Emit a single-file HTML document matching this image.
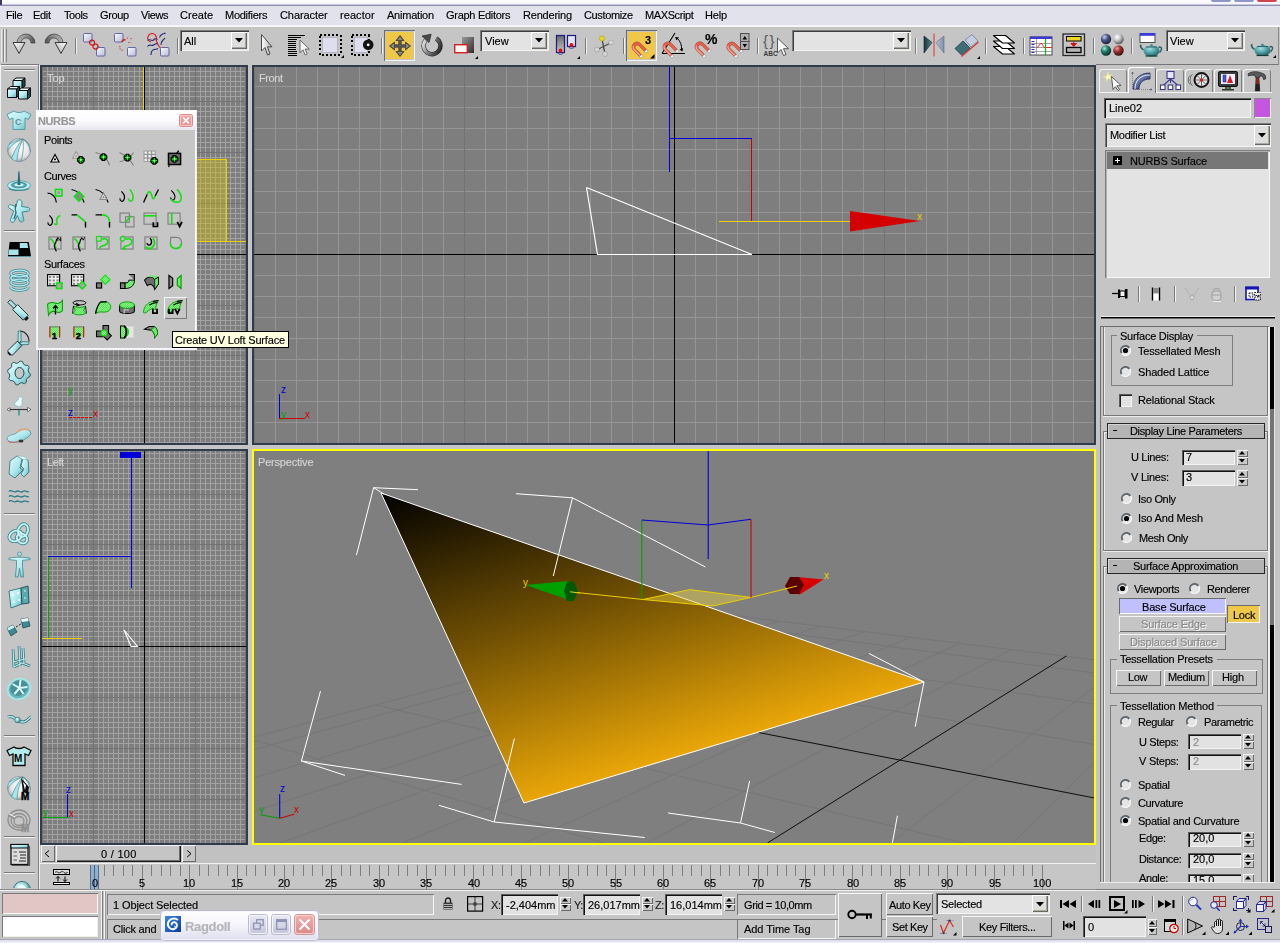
<!DOCTYPE html>
<html><head><meta charset="utf-8"><title>3ds max</title><style>html,body{margin:0;padding:0}body{width:1280px;height:943px;position:relative;overflow:hidden;background:#c5c5c5;font-family:'Liberation Sans',sans-serif;font-size:11px}
body>div,body>svg,body>span{position:absolute;display:block}
div div,div svg,div span{position:absolute}
.t{will-change:transform;white-space:pre;-webkit-text-stroke:0.15px currentColor}
svg{overflow:hidden}
</style></head><body>
<svg width="0" height="0" style="left:0;top:0"><defs><linearGradient id="bxg" x1="0" y1="0" x2="1" y2="1"><stop offset="0" stop-color="#fafaff"/><stop offset="1" stop-color="#b8bcd8"/></linearGradient><linearGradient id="mg" x1="0" y1="0" x2="1" y2="0"><stop offset="0" stop-color="#f08a70"/><stop offset="0.500" stop-color="#e24a30"/><stop offset="1" stop-color="#b83020"/></linearGradient><radialGradient id="tp" cx="0.400" cy="0.300" r="0.800"><stop offset="0" stop-color="#a8dede"/><stop offset="0.500" stop-color="#4a9ea2"/><stop offset="1" stop-color="#1e4e54"/></radialGradient><linearGradient id="tl" x1="0" y1="0" x2="1" y2="1"><stop offset="0" stop-color="#e2fdfd"/><stop offset="0.550" stop-color="#aee8ee"/><stop offset="1" stop-color="#62b0b8"/></linearGradient>
<radialGradient id="tr" cx="0.350" cy="0.300" r="0.800"><stop offset="0" stop-color="#e4fcfc"/><stop offset="0.500" stop-color="#8ed0d6"/><stop offset="1" stop-color="#2e6e76"/></radialGradient><radialGradient id="bg1" cx="0.550" cy="0.400" r="0.700"><stop offset="0" stop-color="#ffffff"/><stop offset="0.600" stop-color="#e4e4e4"/><stop offset="1" stop-color="#8e8e8e"/></radialGradient><pattern id="gh" width="2" height="2" patternUnits="userSpaceOnUse"><rect width="2" height="2" fill="#18e018"/><rect width="1" height="1" fill="#c8f8c8"/><rect x="1" y="1" width="1" height="1" fill="#c8f8c8"/></pattern></defs></svg>
<div style="left:0px;top:0px;width:1280px;height:4px;background:linear-gradient(#ffffff,#f4f4fa);"></div>
<div style="left:0px;top:4px;width:1280px;height:1px;background:#c9c9dd;"></div>
<div style="left:0px;top:5px;width:1280px;height:1px;background:#8f8fb4;"></div>
<div style="left:0px;top:0px;width:2px;height:5px;background:#3a3a6a;"></div>
<div style="left:1211px;top:0px;width:20px;height:2px;background:#8d96c6;border-radius:0 0 3px 3px"></div>
<div style="left:1234px;top:0px;width:20px;height:2px;background:#8d96c6;border-radius:0 0 3px 3px"></div>
<div style="left:1257px;top:0px;width:20px;height:2px;background:#d0464f;border-radius:0 0 3px 3px"></div>
<div style="left:0px;top:6px;width:1280px;height:19px;background:#e1e2ec;"></div>
<div style="left:0px;top:25px;width:1280px;height:2px;background:#f6f6f8;"></div>
<span class="t" style="left:6.00px;top:10px;font-size:11px;line-height:11px;color:#000;letter-spacing:-0.400px;">File</span>
<span class="t" style="left:33.00px;top:10px;font-size:11px;line-height:11px;color:#000;letter-spacing:-0.299px;">Edit</span>
<span class="t" style="left:64.00px;top:10px;font-size:11px;line-height:11px;color:#000;letter-spacing:-0.400px;">Tools</span>
<span class="t" style="left:100.00px;top:10px;font-size:11px;line-height:11px;color:#000;letter-spacing:-0.364px;">Group</span>
<span class="t" style="left:141.00px;top:10px;font-size:11px;line-height:11px;color:#000;letter-spacing:-0.400px;">Views</span>
<span class="t" style="left:180.00px;top:10px;font-size:11px;line-height:11px;color:#000;letter-spacing:0.020px;">Create</span>
<span class="t" style="left:225.00px;top:10px;font-size:11px;line-height:11px;color:#000;letter-spacing:-0.265px;">Modifiers</span>
<span class="t" style="left:280.00px;top:10px;font-size:11px;line-height:11px;color:#000;letter-spacing:-0.079px;">Character</span>
<span class="t" style="left:340.00px;top:10px;font-size:11px;line-height:11px;color:#000;letter-spacing:0.071px;">reactor</span>
<span class="t" style="left:387.00px;top:10px;font-size:11px;line-height:11px;color:#000;letter-spacing:-0.225px;">Animation</span>
<span class="t" style="left:446.00px;top:10px;font-size:11px;line-height:11px;color:#000;letter-spacing:-0.280px;">Graph Editors</span>
<span class="t" style="left:523.00px;top:10px;font-size:11px;line-height:11px;color:#000;letter-spacing:-0.205px;">Rendering</span>
<span class="t" style="left:584.00px;top:10px;font-size:11px;line-height:11px;color:#000;letter-spacing:-0.355px;">Customize</span>
<span class="t" style="left:645.00px;top:10px;font-size:11px;line-height:11px;color:#000;letter-spacing:-0.400px;">MAXScript</span>
<span class="t" style="left:705.00px;top:10px;font-size:11px;line-height:11px;color:#000;letter-spacing:-0.168px;">Help</span>
<div style="left:1px;top:29px;width:1px;height:33px;background:#eeeeee;"></div>
<div style="left:3px;top:29px;width:1px;height:33px;background:#858585;"></div>
<div style="left:4px;top:29px;width:1px;height:33px;background:#eeeeee;"></div>
<div style="left:6px;top:29px;width:1px;height:33px;background:#858585;"></div>
<div style="left:0px;top:940px;width:1280px;height:3px;background:linear-gradient(#d8d8ea,#f4f4fc);"></div>
<div style="left:0px;top:939px;width:1280px;height:1px;background:#a8a8b8;"></div>
<div style="left:40px;top:65px;width:208px;height:380px;background:#303c4c;"></div>
<svg style="left:42px;top:67px;" width="204" height="376"><rect width="204" height="376" fill="#7e7e7e"/><path d="M5.5 0V376M10.5 0V376M15.5 0V376M20.5 0V376M25.5 0V376M31.5 0V376M36.5 0V376M41.5 0V376M46.5 0V376M56.5 0V376M61.5 0V376M66.5 0V376M71.5 0V376M76.5 0V376M81.5 0V376M86.5 0V376M92.5 0V376M97.5 0V376M107.5 0V376M112.5 0V376M117.5 0V376M122.5 0V376M127.5 0V376M132.5 0V376M137.5 0V376M142.5 0V376M147.5 0V376M158.5 0V376M163.5 0V376M168.5 0V376M173.5 0V376M178.5 0V376M183.5 0V376M188.5 0V376M193.5 0V376M198.5 0V376M0 4.5H204M0 9.5H204M0 14.5H204M0 19.5H204M0 24.5H204M0 29.5H204M0 39.5H204M0 44.5H204M0 49.5H204M0 55.5H204M0 60.5H204M0 65.5H204M0 70.5H204M0 75.5H204M0 80.5H204M0 90.5H204M0 95.5H204M0 100.5H204M0 105.5H204M0 110.5H204M0 116.5H204M0 121.5H204M0 126.5H204M0 131.5H204M0 141.5H204M0 146.5H204M0 151.5H204M0 156.5H204M0 161.5H204M0 166.5H204M0 171.5H204M0 177.5H204M0 182.5H204M0 192.5H204M0 197.5H204M0 202.5H204M0 207.5H204M0 212.5H204M0 217.5H204M0 222.5H204M0 227.5H204M0 232.5H204M0 243.5H204M0 248.5H204M0 253.5H204M0 258.5H204M0 263.5H204M0 268.5H204M0 273.5H204M0 278.5H204M0 283.5H204M0 293.5H204M0 299.5H204M0 304.5H204M0 309.5H204M0 314.5H204M0 319.5H204M0 324.5H204M0 329.5H204M0 334.5H204M0 344.5H204M0 349.5H204M0 354.5H204M0 360.5H204M0 365.5H204M0 370.5H204M0 375.5H204" stroke="#a2a2a2" stroke-width="1" shape-rendering="crispEdges" fill="none"/><path d="M0.5 0V376M51.5 0V376M153.5 0V376M203.5 0V376M0 34.5H204M0 85.5H204M0 136.5H204M0 238.5H204M0 288.5H204M0 339.5H204" stroke="#737373" stroke-width="1" shape-rendering="crispEdges" fill="none"/><path d="M102.5 0V376M0 187.5H204" stroke="#000" stroke-width="1" shape-rendering="crispEdges" fill="none"/><rect x="102" y="92" width="82" height="82" fill="#d8c400" fill-opacity="0.38"/><path d="M101.5 0V174M101 174.5H204M101 92.5H184M184.5 92V174" stroke="#ecd000" stroke-width="1" fill="none" shape-rendering="crispEdges"/><path d="M27 350.5H51" stroke="#d00000" stroke-dasharray="3 1" stroke-width="1" fill="none" shape-rendering="crispEdges"/><text x="26" y="327" fill="#00a000" font-size="10" font-family="Liberation Sans, sans-serif">y</text><text x="26" y="349" fill="#0000d0" font-size="10" font-family="Liberation Sans, sans-serif">z</text><text x="51" y="350" fill="#d00000" font-size="10" font-family="Liberation Sans, sans-serif">x</text></svg>
<span class="t" style="left:47.40px;top:73px;font-size:11px;line-height:11px;color:#d4d4d4;letter-spacing:-0.059px;">Top</span>
<div style="left:252px;top:65px;width:844px;height:380px;background:#303c4c;"></div>
<svg style="left:254px;top:67px;" width="840" height="376"><rect width="840" height="376" fill="#7e7e7e"/><path d="M21.5 0V376M42.5 0V376M63.5 0V376M84.5 0V376M105.5 0V376M126.5 0V376M147.5 0V376M168.5 0V376M189.5 0V376M231.5 0V376M252.5 0V376M273.5 0V376M294.5 0V376M315.5 0V376M336.5 0V376M357.5 0V376M378.5 0V376M399.5 0V376M441.5 0V376M462.5 0V376M483.5 0V376M504.5 0V376M525.5 0V376M546.5 0V376M567.5 0V376M588.5 0V376M609.5 0V376M651.5 0V376M672.5 0V376M693.5 0V376M714.5 0V376M735.5 0V376M756.5 0V376M777.5 0V376M798.5 0V376M819.5 0V376M0 19.5H840M0 40.5H840M0 61.5H840M0 82.5H840M0 103.5H840M0 124.5H840M0 145.5H840M0 166.5H840M0 208.5H840M0 229.5H840M0 250.5H840M0 271.5H840M0 292.5H840M0 313.5H840M0 334.5H840M0 355.5H840" stroke="#959595" stroke-width="1" shape-rendering="crispEdges" fill="none"/><path d="M0.5 0V376M210.5 0V376M630.5 0V376" stroke="#737373" stroke-width="1" shape-rendering="crispEdges" fill="none"/><path d="M420.5 0V376M0 187.5H840" stroke="#000" stroke-width="1" shape-rendering="crispEdges" fill="none"/><path d="M415.5 0V105M415 71.5H498" stroke="#0000d8" stroke-width="1" fill="none" shape-rendering="crispEdges"/><path d="M497.5 72V154" stroke="#d00000" stroke-width="1" fill="none" shape-rendering="crispEdges"/><path d="M465 154.5H597" stroke="#ecd000" stroke-width="1" fill="none" shape-rendering="crispEdges"/><path d="M596 144L666 154L596 164.5z" fill="#d40000"/><text x="663" y="153" fill="#ecd000" font-size="10" font-family="Liberation Sans, sans-serif">x</text><path d="M332.5 120.5L343.5 187.5L498.0 187.5L332.5 120.5" stroke="#fff" stroke-width="1.2" fill="none" /><path d="M25.5 327V352" stroke="#0000d8" stroke-width="1" fill="none" shape-rendering="crispEdges"/><path d="M25 351.5H51" stroke="#d00000" stroke-width="1" fill="none" shape-rendering="crispEdges"/><text x="27" y="326" fill="#0000d8" font-size="10" font-family="Liberation Sans, sans-serif">z</text><text x="51" y="351" fill="#d00000" font-size="10" font-family="Liberation Sans, sans-serif">x</text><text x="27" y="351" fill="#00a000" font-size="10" font-family="Liberation Sans, sans-serif">y</text></svg>
<span class="t" style="left:258.90px;top:73px;font-size:11px;line-height:11px;color:#d4d4d4;letter-spacing:-0.400px;">Front</span>
<div style="left:40px;top:449px;width:208px;height:396px;background:#303c4c;"></div>
<svg style="left:42px;top:451px;" width="204" height="392"><rect width="204" height="392" fill="#7e7e7e"/><path d="M5.5 0V392M10.5 0V392M15.5 0V392M20.5 0V392M25.5 0V392M31.5 0V392M36.5 0V392M41.5 0V392M46.5 0V392M56.5 0V392M61.5 0V392M66.5 0V392M71.5 0V392M76.5 0V392M81.5 0V392M86.5 0V392M92.5 0V392M97.5 0V392M107.5 0V392M112.5 0V392M117.5 0V392M122.5 0V392M127.5 0V392M132.5 0V392M137.5 0V392M142.5 0V392M147.5 0V392M158.5 0V392M163.5 0V392M168.5 0V392M173.5 0V392M178.5 0V392M183.5 0V392M188.5 0V392M193.5 0V392M198.5 0V392M0 2.5H204M0 7.5H204M0 12.5H204M0 17.5H204M0 22.5H204M0 27.5H204M0 32.5H204M0 38.5H204M0 48.5H204M0 53.5H204M0 58.5H204M0 63.5H204M0 68.5H204M0 73.5H204M0 78.5H204M0 83.5H204M0 88.5H204M0 99.5H204M0 104.5H204M0 109.5H204M0 114.5H204M0 119.5H204M0 124.5H204M0 129.5H204M0 134.5H204M0 139.5H204M0 149.5H204M0 154.5H204M0 160.5H204M0 165.5H204M0 170.5H204M0 175.5H204M0 180.5H204M0 185.5H204M0 190.5H204M0 200.5H204M0 205.5H204M0 210.5H204M0 215.5H204M0 221.5H204M0 226.5H204M0 231.5H204M0 236.5H204M0 241.5H204M0 251.5H204M0 256.5H204M0 261.5H204M0 266.5H204M0 271.5H204M0 276.5H204M0 282.5H204M0 287.5H204M0 292.5H204M0 302.5H204M0 307.5H204M0 312.5H204M0 317.5H204M0 322.5H204M0 327.5H204M0 332.5H204M0 337.5H204M0 343.5H204M0 353.5H204M0 358.5H204M0 363.5H204M0 368.5H204M0 373.5H204M0 378.5H204M0 383.5H204M0 388.5H204" stroke="#a2a2a2" stroke-width="1" shape-rendering="crispEdges" fill="none"/><path d="M0.5 0V392M51.5 0V392M153.5 0V392M203.5 0V392M0 43.5H204M0 93.5H204M0 144.5H204M0 246.5H204M0 297.5H204M0 348.5H204" stroke="#737373" stroke-width="1" shape-rendering="crispEdges" fill="none"/><path d="M102.5 0V392M0 195.5H204" stroke="#000" stroke-width="1" shape-rendering="crispEdges" fill="none"/><rect x="78" y="1" width="21" height="6" fill="#0000d8"/><path d="M89.5 7V137M6 105.5H90" stroke="#0000d8" stroke-width="1" fill="none" shape-rendering="crispEdges"/><path d="M6.5 106V187" stroke="#00a800" stroke-width="1" fill="none" shape-rendering="crispEdges"/><path d="M0 187.5H40" stroke="#ecd000" stroke-width="1" fill="none" shape-rendering="crispEdges"/><path d="M82.0 179.0L89.0 195.5L95.5 195.5L82.0 179.0" stroke="#fff" stroke-width="1.1" fill="none" /><path d="M25.5 343V367" stroke="#0000d8" stroke-width="1" fill="none" shape-rendering="crispEdges"/><path d="M1 366.5H26" stroke="#00a800" stroke-width="1" fill="none" shape-rendering="crispEdges"/><text x="24" y="342" fill="#0000d8" font-size="10" font-family="Liberation Sans, sans-serif">z</text><text x="1" y="365" fill="#00a000" font-size="10" font-family="Liberation Sans, sans-serif">y</text><text x="27" y="366" fill="#d00000" font-size="10" font-family="Liberation Sans, sans-serif">x</text></svg>
<span class="t" style="left:46.80px;top:457px;font-size:11px;line-height:11px;color:#d4d4d4;letter-spacing:-0.397px;">Left</span>
<div style="left:252px;top:449px;width:844px;height:396px;background:#ffff00;"></div>
<svg style="left:254px;top:451px;" width="840" height="392"><rect width="840" height="392" fill="#7f7f7f"/><path d="M2003.5 1807.9L1313.2 267.0M1412.8 1455.6L1226.0 256.3M1012.5 1216.8L1144.9 246.3M723.4 1044.3L1069.3 237.0M504.7 913.9L998.7 228.3M333.5 811.8L932.6 220.2M195.9 729.7L870.6 212.6M-11.7 605.9L757.5 198.7M-91.9 558.0L705.7 192.3M-160.9 516.9L656.8 186.3M-220.7 481.2L610.5 180.6M-273.2 449.9L566.6 175.2M-319.6 422.2L525.0 170.1M-360.8 397.6L485.4 165.3M-379.8 386.3L466.3 162.9M2003.5 1807.9L-379.8 386.3M1664.9 1052.0L-167.1 330.1M1523.9 737.4L-5.4 287.5M1446.7 564.9L121.7 253.9M1364.3 381.0L308.6 204.6M1339.8 326.2L379.4 185.9M1321.0 284.4L439.5 170.0M1313.2 267.0L466.3 162.9" stroke="#767676" stroke-width="1" fill="none"/><path d="M504.0 281.4L840.0 346.9" stroke="#000" stroke-width="0.9" fill="none" /><path d="M812.4 205.0L513.4 392.0" stroke="#000" stroke-width="0.9" fill="none" /><defs><linearGradient id="tg" gradientUnits="userSpaceOnUse" x1="127.0" y1="42.0" x2="224.9" y2="365.6"><stop offset="0" stop-color="#000"/><stop offset="0.500" stop-color="#6f4f03"/><stop offset="1" stop-color="#e9a608"/></linearGradient></defs><path d="M127 42L270 352L670 231z" fill="url(#tg)" stroke="#fff" stroke-width="1"/><path d="M164.0 38.7L119.6 36.7L102.5 104.0" stroke="#fff" stroke-width="1" fill="none" /><path d="M119.6 36.7L130.0 43.0" stroke="#fff" stroke-width="1" fill="none" /><path d="M262.0 42.7L318.5 46.8L299.3 125.0" stroke="#fff" stroke-width="1" fill="none" /><path d="M318.5 46.8L451.5 116.0" stroke="#fff" stroke-width="1" fill="none" /><path d="M387.8 69.0L387.8 148.4" stroke="#00a000" stroke-width="1.1" fill="none" /><path d="M387.79999999999995 148.39999999999998L435.79999999999995 138.60000000000002L497 146.39999999999998L459 155z" fill="#e8d040" fill-opacity="0.45"/><path d="M318.0 141.0L389.0 148.5L435.8 138.6L497.0 146.4" stroke="#ecd000" stroke-width="1" fill="none" /><path d="M389.0 148.5L459.0 155.0L497.0 146.4L541.0 135.5" stroke="#ecd000" stroke-width="1" fill="none" /><path d="M454.2 0.0L454.2 108.0" stroke="#0000d8" stroke-width="1.1" fill="none" /><path d="M387.8 69.0L454.0 74.0L497.0 68.3" stroke="#0000d8" stroke-width="1.1" fill="none" /><path d="M497.0 68.3L497.0 146.4" stroke="#d00000" stroke-width="1.1" fill="none" /><path d="M271.4 134L315 130L318 150z" fill="#00a000"/><path d="M313 130.5L320 130.5L323.5 140L320 150L313 150L310 140z" fill="#005a00"/><path d="M316.0 140.8L326.0 142.0" stroke="#ecd000" stroke-width="1" fill="none" /><text x="269" y="135" fill="#ecd000" font-size="10" font-family="Liberation Sans, sans-serif">y</text><path d="M569.4 128.5L543 126L545 144z" fill="#d80000"/><path d="M536 126l9 0l5 8l-5 9l-9 0l-5 -8z" fill="#5a0000"/><path d="M531.0 138.0L543.0 135.0" stroke="#ecd000" stroke-width="1" fill="none" /><text x="570" y="128" fill="#ecd000" font-size="10" font-family="Liberation Sans, sans-serif">x</text><path d="M614.9 202.4L670.0 231.0L661.2 275.7" stroke="#fff" stroke-width="1" fill="none" /><path d="M66.5 240.0L47.4 310.0L207.6 333.4" stroke="#fff" stroke-width="1" fill="none" /><path d="M47.4 310.0L91.0 324.4" stroke="#fff" stroke-width="1" fill="none" /><path d="M260.4 287.4L240.2 371.0L390.7 386.5" stroke="#fff" stroke-width="1" fill="none" /><path d="M240.2 371.0L185.0 354.3" stroke="#fff" stroke-width="1" fill="none" /><path d="M495.6 330.0L486.5 372.0L520.8 381.5" stroke="#fff" stroke-width="1" fill="none" /><path d="M486.5 372.0L414.0 362.0" stroke="#fff" stroke-width="1" fill="none" /><path d="M643.4 364.7L638.4 392.0" stroke="#fff" stroke-width="1" fill="none" /><path d="M25.7 367.2L25.7 343.0" stroke="#0000d8" stroke-width="1.1" fill="none" /><path d="M25.7 367.2L7.4 364.0" stroke="#00a000" stroke-width="1.1" fill="none" /><path d="M25.7 367.2L40.2 363.2" stroke="#d00000" stroke-width="1.1" fill="none" /><text x="26" y="341" fill="#0000d8" font-size="10" font-family="Liberation Sans, sans-serif">z</text><text x="5" y="362" fill="#00a000" font-size="10" font-family="Liberation Sans, sans-serif">y</text><text x="40" y="362" fill="#d00000" font-size="10" font-family="Liberation Sans, sans-serif">x</text></svg>
<span class="t" style="left:258.40px;top:457px;font-size:11px;line-height:11px;color:#d4d4d4;letter-spacing:-0.195px;">Perspective</span>
<div style="left:1096px;top:64px;width:183px;height:1px;background:#767676;"></div>
<div style="left:1278px;top:27px;width:1px;height:38px;background:#8a8a8a;"></div>
<div style="left:1099px;top:69px;width:28px;height:23px;background:#c5c5c5;box-shadow:inset 1px 1px 0 #f4f4f4,inset -1px 0 0 #808080;border-radius:3px 3px 0 0"></div>
<div style="left:1128px;top:67px;width:28px;height:26px;background:#c5c5c5;box-shadow:inset 1px 1px 0 #fff,inset -1px 0 0 #6a6a6a;border-radius:3px 3px 0 0"></div>
<div style="left:1156px;top:69px;width:28px;height:23px;background:#c5c5c5;box-shadow:inset 1px 1px 0 #f4f4f4,inset -1px 0 0 #808080;border-radius:3px 3px 0 0"></div>
<div style="left:1185px;top:69px;width:28px;height:23px;background:#c5c5c5;box-shadow:inset 1px 1px 0 #f4f4f4,inset -1px 0 0 #808080;border-radius:3px 3px 0 0"></div>
<div style="left:1214px;top:69px;width:28px;height:23px;background:#c5c5c5;box-shadow:inset 1px 1px 0 #f4f4f4,inset -1px 0 0 #808080;border-radius:3px 3px 0 0"></div>
<div style="left:1243px;top:69px;width:28px;height:23px;background:#c5c5c5;box-shadow:inset 1px 1px 0 #f4f4f4,inset -1px 0 0 #808080;border-radius:3px 3px 0 0"></div>
<div style="left:1099px;top:92px;width:29px;height:1px;background:#f4f4f4;"></div>
<div style="left:1156px;top:92px;width:116px;height:1px;background:#f4f4f4;"></div>
<div style="left:1104px;top:98px;width:147px;height:20px;background:#e2e2e2;box-shadow:inset 1px 1px 0 #5a5a5a,inset 2px 2px 0 #111,inset -1px -1px 0 #f4f4f4;"></div>
<span class="t" style="left:1108.50px;top:103px;font-size:11px;line-height:11px;color:#000;">Line02</span>
<div style="left:1254px;top:98px;width:17px;height:20px;background:#c556e0;box-shadow:inset 1px 1px 0 #8a8a8a,inset -1px -1px 0 #f4f4f4;"></div>
<div style="left:1105px;top:123px;width:166px;height:24px;background:#e3e3e3;box-shadow:inset 1px 1px 0 #7c7c7c,inset 2px 2px 0 #3c3c3c,inset -1px -1px 0 #f4f4f4;"></div>
<div style="left:1254px;top:125px;width:16px;height:20px;background:#dedede;box-shadow:inset 1px 1px 0 #fff,inset -1px -1px 0 #6a6a60,inset -2px -2px 0 #a8a8a0;"></div>
<svg style="left:1258px;top:133px;" width="8" height="5"><path d="M0 0h8l-4 4.5z" fill="#000"/></svg>
<span class="t" style="left:1109.70px;top:130px;font-size:11px;line-height:11px;color:#000;letter-spacing:-0.312px;">Modifier List</span>
<div style="left:1105px;top:150px;width:165px;height:128px;background:#e3e3e3;box-shadow:inset 1px 1px 0 #7c7c7c,inset 2px 2px 0 #b0b0b0,inset -1px -1px 0 #f8f8f8;"></div>
<div style="left:1107px;top:152px;width:161px;height:17px;background:#777777;"></div>
<div style="left:1113px;top:156px;width:9px;height:9px;background:#000;"></div>
<div style="left:1115px;top:160px;width:5px;height:1px;background:#fff;"></div>
<div style="left:1117px;top:158px;width:1px;height:5px;background:#fff;"></div>
<span class="t" style="left:1130.00px;top:156px;font-size:11px;line-height:11px;color:#000;letter-spacing:-0.196px;">NURBS Surface</span>
<div style="left:1138px;top:286px;width:1px;height:16px;background:#7a7a7a;"></div>
<div style="left:1139px;top:286px;width:1px;height:16px;background:#f2f2f2;"></div>
<div style="left:1174px;top:286px;width:1px;height:16px;background:#7a7a7a;"></div>
<div style="left:1175px;top:286px;width:1px;height:16px;background:#f2f2f2;"></div>
<div style="left:1234px;top:286px;width:1px;height:16px;background:#7a7a7a;"></div>
<div style="left:1235px;top:286px;width:1px;height:16px;background:#f2f2f2;"></div>
<div style="left:1101px;top:316px;width:174px;height:1px;background:#ececec;"></div>
<div style="left:1101px;top:317px;width:174px;height:1px;background:#000;"></div>
<div style="left:1101px;top:318px;width:174px;height:1px;background:#6a6a6a;"></div>
<div style="left:1100px;top:326px;width:169px;height:1px;background:#6e6e6e;"></div>
<div style="left:1100px;top:326px;width:1px;height:556px;background:#6e6e6e;"></div>
<div style="left:1268px;top:327px;width:2px;height:555px;background:#f0f0f0;"></div>
<div style="left:1274px;top:327px;width:1px;height:555px;background:#e4e4e4;"></div>
<div style="left:1100px;top:882px;width:175px;height:1px;background:#eeeeee;"></div>
<div style="left:1270px;top:327px;width:4px;height:82px;background:#000;"></div>
<div style="left:1270px;top:409px;width:4px;height:216px;background:#747474;"></div>
<div style="left:1270px;top:625px;width:4px;height:257px;background:#000;"></div>
<div style="left:1103px;top:327px;width:1px;height:89px;background:#787878;"></div>
<div style="left:1104px;top:327px;width:1px;height:88px;background:#ececec;"></div>
<div style="left:1267px;top:327px;width:1px;height:89px;background:#787878;"></div>
<div style="left:1103px;top:415px;width:165px;height:1px;background:#787878;"></div>
<div style="left:1103px;top:416px;width:166px;height:1px;background:#ececec;"></div>
<div style="left:1111px;top:335px;width:122px;height:51px;box-shadow:inset 1px 1px 0 #7e7e7e,inset -1px -1px 0 #7e7e7e;"></div>
<div style="left:1117.4px;top:333px;width:79.79999999999995px;height:5px;background:#c5c5c5;"></div>
<span class="t" style="left:1120.40px;top:331px;font-size:11px;line-height:11px;color:#000;letter-spacing:-0.267px;">Surface Display</span>
<svg style="left:1119px;top:344px;" width="13" height="13"><circle cx="6.500" cy="6.500" r="5.400" fill="#e4e4e4"/><path d="M2.40 9.37A5 5 0 0 0 10.60 3.63" stroke="#f6f6f6" stroke-width="1.200" fill="none"/><path d="M10.27 3.86A4.6 4.6 0 0 0 2.73 9.14" stroke="#5c646c" stroke-width="1.900" fill="none"/><circle cx="6.500" cy="6.500" r="2.600" fill="#000"/></svg>
<span class="t" style="left:1137.80px;top:346px;font-size:11px;line-height:11px;color:#000;letter-spacing:-0.165px;">Tessellated Mesh</span>
<svg style="left:1119px;top:365px;" width="13" height="13"><circle cx="6.500" cy="6.500" r="5.400" fill="#e4e4e4"/><path d="M2.40 9.37A5 5 0 0 0 10.60 3.63" stroke="#f6f6f6" stroke-width="1.200" fill="none"/><path d="M10.27 3.86A4.6 4.6 0 0 0 2.73 9.14" stroke="#5c646c" stroke-width="1.900" fill="none"/></svg>
<span class="t" style="left:1137.80px;top:367px;font-size:11px;line-height:11px;color:#000;letter-spacing:-0.159px;">Shaded Lattice</span>
<div style="left:1119px;top:394px;width:13px;height:13px;background:#e2e2e2;box-shadow:inset 1px 1px 0 #5a5a5a,inset 2px 2px 0 #222,inset -1px -1px 0 #f4f4f4;"></div>
<span class="t" style="left:1137.80px;top:395px;font-size:11px;line-height:11px;color:#000;letter-spacing:-0.186px;">Relational Stack</span>
<div style="left:1103px;top:431px;width:1px;height:120px;background:#787878;"></div>
<div style="left:1104px;top:432px;width:1px;height:118px;background:#ececec;"></div>
<div style="left:1267px;top:431px;width:1px;height:120px;background:#787878;"></div>
<div style="left:1103px;top:550px;width:165px;height:1px;background:#787878;"></div>
<div style="left:1103px;top:551px;width:166px;height:1px;background:#ececec;"></div>
<div style="left:1103px;top:431px;width:165px;height:1px;background:#787878;"></div>
<div style="left:1104px;top:432px;width:163px;height:1px;background:#ececec;"></div>
<div style="left:1107px;top:423px;width:158px;height:16px;background:#b4b4b4;box-shadow:inset 0 0 0 1px #262626,inset 2px 2px 0 #d4d4d4;"></div>
<div style="left:1113px;top:430px;width:4px;height:1px;background:#000;"></div>
<span class="t" style="left:1130.40px;top:426px;font-size:11px;line-height:11px;color:#000;letter-spacing:-0.342px;">Display Line Parameters</span>
<span class="t" style="left:1131.40px;top:452px;font-size:11px;line-height:11px;color:#000;letter-spacing:-0.328px;">U Lines:</span>
<div style="left:1182px;top:450px;width:53px;height:15px;background:#e2e2e2;box-shadow:inset 1px 1px 0 #5a5a5a,inset 2px 2px 0 #111,inset -1px -1px 0 #f4f4f4;"></div>
<span class="t" style="left:1186.30px;top:452px;font-size:11px;line-height:11px;color:#000;">7</span>
<div style="left:1237px;top:450px;width:11px;height:7px;background:#c9c9c9;box-shadow:inset 1px 1px 0 #f4f4f4,inset -1px -1px 0 #6a6a6a;"></div>
<svg style="left:1239px;top:451px;" width="7" height="4"><path d="M0 3.5L3 0L6 3.5z" fill="#000"/></svg>
<div style="left:1237px;top:457px;width:11px;height:8px;background:#c9c9c9;box-shadow:inset 1px 1px 0 #f4f4f4,inset -1px -1px 0 #6a6a6a;"></div>
<svg style="left:1239px;top:459px;" width="7" height="4"><path d="M0 0L3 3.5L6 0z" fill="#000"/></svg>
<span class="t" style="left:1131.40px;top:472px;font-size:11px;line-height:11px;color:#000;letter-spacing:-0.241px;">V Lines:</span>
<div style="left:1182px;top:470px;width:53px;height:16px;background:#e2e2e2;box-shadow:inset 1px 1px 0 #5a5a5a,inset 2px 2px 0 #111,inset -1px -1px 0 #f4f4f4;"></div>
<span class="t" style="left:1186.30px;top:472px;font-size:11px;line-height:11px;color:#000;">3</span>
<div style="left:1237px;top:470px;width:11px;height:8px;background:#c9c9c9;box-shadow:inset 1px 1px 0 #f4f4f4,inset -1px -1px 0 #6a6a6a;"></div>
<svg style="left:1239px;top:472px;" width="7" height="4"><path d="M0 3.5L3 0L6 3.5z" fill="#000"/></svg>
<div style="left:1237px;top:478px;width:11px;height:8px;background:#c9c9c9;box-shadow:inset 1px 1px 0 #f4f4f4,inset -1px -1px 0 #6a6a6a;"></div>
<svg style="left:1239px;top:480px;" width="7" height="4"><path d="M0 0L3 3.5L6 0z" fill="#000"/></svg>
<svg style="left:1120px;top:492px;" width="13" height="13"><circle cx="6.500" cy="6.500" r="5.400" fill="#e4e4e4"/><path d="M2.40 9.37A5 5 0 0 0 10.60 3.63" stroke="#f6f6f6" stroke-width="1.200" fill="none"/><path d="M10.27 3.86A4.6 4.6 0 0 0 2.73 9.14" stroke="#5c646c" stroke-width="1.900" fill="none"/></svg>
<span class="t" style="left:1137.50px;top:494px;font-size:11px;line-height:11px;color:#000;letter-spacing:-0.335px;">Iso Only</span>
<svg style="left:1120px;top:512px;" width="13" height="13"><circle cx="6.500" cy="6.500" r="5.400" fill="#e4e4e4"/><path d="M2.40 9.37A5 5 0 0 0 10.60 3.63" stroke="#f6f6f6" stroke-width="1.200" fill="none"/><path d="M10.27 3.86A4.6 4.6 0 0 0 2.73 9.14" stroke="#5c646c" stroke-width="1.900" fill="none"/><circle cx="6.500" cy="6.500" r="2.600" fill="#000"/></svg>
<span class="t" style="left:1137.50px;top:513px;font-size:11px;line-height:11px;color:#000;letter-spacing:-0.149px;">Iso And Mesh</span>
<svg style="left:1120px;top:531px;" width="13" height="13"><circle cx="6.500" cy="6.500" r="5.400" fill="#e4e4e4"/><path d="M2.40 9.37A5 5 0 0 0 10.60 3.63" stroke="#f6f6f6" stroke-width="1.200" fill="none"/><path d="M10.27 3.86A4.6 4.6 0 0 0 2.73 9.14" stroke="#5c646c" stroke-width="1.900" fill="none"/></svg>
<span class="t" style="left:1138.50px;top:533px;font-size:11px;line-height:11px;color:#000;letter-spacing:-0.400px;">Mesh Only</span>
<div style="left:1103px;top:566px;width:1px;height:316px;background:#787878;"></div>
<div style="left:1104px;top:567px;width:1px;height:315px;background:#ececec;"></div>
<div style="left:1267px;top:566px;width:1px;height:316px;background:#787878;"></div>
<div style="left:1103px;top:566px;width:165px;height:1px;background:#787878;"></div>
<div style="left:1104px;top:567px;width:163px;height:1px;background:#ececec;"></div>
<div style="left:1107px;top:558px;width:158px;height:16px;background:#b4b4b4;box-shadow:inset 0 0 0 1px #262626,inset 2px 2px 0 #d4d4d4;"></div>
<div style="left:1113px;top:565px;width:4px;height:1px;background:#000;"></div>
<span class="t" style="left:1133.30px;top:561px;font-size:11px;line-height:11px;color:#000;letter-spacing:-0.263px;">Surface Approximation</span>
<svg style="left:1116px;top:582px;" width="13" height="13"><circle cx="6.500" cy="6.500" r="5.400" fill="#e4e4e4"/><path d="M2.40 9.37A5 5 0 0 0 10.60 3.63" stroke="#f6f6f6" stroke-width="1.200" fill="none"/><path d="M10.27 3.86A4.6 4.6 0 0 0 2.73 9.14" stroke="#5c646c" stroke-width="1.900" fill="none"/><circle cx="6.500" cy="6.500" r="2.600" fill="#000"/></svg>
<span class="t" style="left:1134.00px;top:584px;font-size:11px;line-height:11px;color:#000;letter-spacing:-0.325px;">Viewports</span>
<svg style="left:1188px;top:582px;" width="13" height="13"><circle cx="6.500" cy="6.500" r="5.400" fill="#e4e4e4"/><path d="M2.40 9.37A5 5 0 0 0 10.60 3.63" stroke="#f6f6f6" stroke-width="1.200" fill="none"/><path d="M10.27 3.86A4.6 4.6 0 0 0 2.73 9.14" stroke="#5c646c" stroke-width="1.900" fill="none"/></svg>
<span class="t" style="left:1206.50px;top:584px;font-size:11px;line-height:11px;color:#000;letter-spacing:-0.399px;">Renderer</span>
<div style="left:1119px;top:598px;width:107px;height:16px;background:#c0c0ff;box-shadow:inset 1px 1px 0 #6a6a6a,inset -1px -1px 0 #f6f6f6;"></div>
<span class="t" style="left:1141.50px;top:602px;font-size:11px;line-height:11px;color:#000;letter-spacing:-0.193px;">Base Surface</span>
<div style="left:1227px;top:605px;width:33px;height:18px;background:#efc84a;box-shadow:inset 1px 1px 0 #6a6a6a,inset -1px -1px 0 #f6f6f6;"></div>
<span class="t" style="left:1232.80px;top:610px;font-size:11px;line-height:11px;color:#000;letter-spacing:-0.245px;">Lock</span>
<div style="left:1119px;top:616px;width:107px;height:16px;background:#c5c5c5;box-shadow:inset 1px 1px 0 #f6f6f6,inset -1px -1px 0 #6a6a6a;"></div>
<span class="t" style="left:1141.50px;top:620px;font-size:11px;line-height:11px;color:#f4f4f4;letter-spacing:-0.158px;">Surface Edge</span>
<span class="t" style="left:1140.50px;top:619px;font-size:11px;line-height:11px;color:#8a8a8a;letter-spacing:-0.158px;">Surface Edge</span>
<div style="left:1119px;top:634px;width:107px;height:16px;background:#c5c5c5;box-shadow:inset 1px 1px 0 #f6f6f6,inset -1px -1px 0 #6a6a6a;"></div>
<span class="t" style="left:1130.60px;top:638px;font-size:11px;line-height:11px;color:#f4f4f4;letter-spacing:-0.141px;">Displaced Surface</span>
<span class="t" style="left:1129.60px;top:637px;font-size:11px;line-height:11px;color:#8a8a8a;letter-spacing:-0.141px;">Displaced Surface</span>
<div style="left:1110px;top:659px;width:153px;height:35px;box-shadow:inset 1px 1px 0 #7e7e7e,inset -1px -1px 0 #7e7e7e;"></div>
<div style="left:1117px;top:657px;width:99.5px;height:5px;background:#c5c5c5;"></div>
<span class="t" style="left:1120.00px;top:654px;font-size:11px;line-height:11px;color:#000;letter-spacing:-0.254px;">Tessellation Presets</span>
<div style="left:1116px;top:670px;width:45px;height:16px;background:#c5c5c5;box-shadow:inset 1px 1px 0 #f6f6f6,inset -1px -1px 0 #6a6a6a;"></div>
<span class="t" style="left:1127.50px;top:672px;font-size:11px;line-height:11px;color:#000;letter-spacing:-0.368px;">Low</span>
<div style="left:1164px;top:670px;width:45px;height:16px;background:#c5c5c5;box-shadow:inset 1px 1px 0 #f6f6f6,inset -1px -1px 0 #6a6a6a;"></div>
<span class="t" style="left:1167.50px;top:672px;font-size:11px;line-height:11px;color:#000;letter-spacing:-0.400px;">Medium</span>
<div style="left:1212px;top:670px;width:45px;height:16px;background:#c5c5c5;box-shadow:inset 1px 1px 0 #f6f6f6,inset -1px -1px 0 #6a6a6a;"></div>
<span class="t" style="left:1222.00px;top:672px;font-size:11px;line-height:11px;color:#000;letter-spacing:-0.168px;">High</span>
<div style="left:1110px;top:705px;width:152px;height:177px;box-shadow:inset 1px 1px 0 #7e7e7e,inset -1px 0 0 #7e7e7e;"></div>
<div style="left:1117px;top:703px;width:100px;height:5px;background:#c5c5c5;"></div>
<span class="t" style="left:1120.00px;top:701px;font-size:11px;line-height:11px;color:#000;letter-spacing:-0.172px;">Tessellation Method</span>
<svg style="left:1119px;top:715px;" width="13" height="13"><circle cx="6.500" cy="6.500" r="5.400" fill="#e4e4e4"/><path d="M2.40 9.37A5 5 0 0 0 10.60 3.63" stroke="#f6f6f6" stroke-width="1.200" fill="none"/><path d="M10.27 3.86A4.6 4.6 0 0 0 2.73 9.14" stroke="#5c646c" stroke-width="1.900" fill="none"/></svg>
<span class="t" style="left:1137.80px;top:717px;font-size:11px;line-height:11px;color:#000;letter-spacing:-0.400px;">Regular</span>
<svg style="left:1185px;top:715px;" width="13" height="13"><circle cx="6.500" cy="6.500" r="5.400" fill="#e4e4e4"/><path d="M2.40 9.37A5 5 0 0 0 10.60 3.63" stroke="#f6f6f6" stroke-width="1.200" fill="none"/><path d="M10.27 3.86A4.6 4.6 0 0 0 2.73 9.14" stroke="#5c646c" stroke-width="1.900" fill="none"/></svg>
<span class="t" style="left:1203.80px;top:717px;font-size:11px;line-height:11px;color:#000;letter-spacing:-0.400px;">Parametric</span>
<span class="t" style="left:1138.50px;top:737px;font-size:11px;line-height:11px;color:#000;letter-spacing:-0.333px;">U Steps:</span>
<div style="left:1188px;top:734px;width:53px;height:15px;background:#e2e2e2;box-shadow:inset 1px 1px 0 #5a5a5a,inset 2px 2px 0 #111,inset -1px -1px 0 #f4f4f4;"></div>
<span class="t" style="left:1192.70px;top:737px;font-size:11px;line-height:11px;color:#8a8a8a;">2</span>
<div style="left:1243px;top:734px;width:11px;height:7px;background:#c9c9c9;box-shadow:inset 1px 1px 0 #f4f4f4,inset -1px -1px 0 #6a6a6a;"></div>
<svg style="left:1245px;top:735px;" width="7" height="4"><path d="M0 3.5L3 0L6 3.5z" fill="#000"/></svg>
<div style="left:1243px;top:741px;width:11px;height:8px;background:#c9c9c9;box-shadow:inset 1px 1px 0 #f4f4f4,inset -1px -1px 0 #6a6a6a;"></div>
<svg style="left:1245px;top:743px;" width="7" height="4"><path d="M0 0L3 3.5L6 0z" fill="#000"/></svg>
<span class="t" style="left:1138.50px;top:756px;font-size:11px;line-height:11px;color:#000;letter-spacing:-0.246px;">V Steps:</span>
<div style="left:1188px;top:754px;width:53px;height:16px;background:#e2e2e2;box-shadow:inset 1px 1px 0 #5a5a5a,inset 2px 2px 0 #111,inset -1px -1px 0 #f4f4f4;"></div>
<span class="t" style="left:1192.70px;top:756px;font-size:11px;line-height:11px;color:#8a8a8a;">2</span>
<div style="left:1243px;top:754px;width:11px;height:8px;background:#c9c9c9;box-shadow:inset 1px 1px 0 #f4f4f4,inset -1px -1px 0 #6a6a6a;"></div>
<svg style="left:1245px;top:756px;" width="7" height="4"><path d="M0 3.5L3 0L6 3.5z" fill="#000"/></svg>
<div style="left:1243px;top:762px;width:11px;height:8px;background:#c9c9c9;box-shadow:inset 1px 1px 0 #f4f4f4,inset -1px -1px 0 #6a6a6a;"></div>
<svg style="left:1245px;top:764px;" width="7" height="4"><path d="M0 0L3 3.5L6 0z" fill="#000"/></svg>
<svg style="left:1119px;top:778px;" width="13" height="13"><circle cx="6.500" cy="6.500" r="5.400" fill="#e4e4e4"/><path d="M2.40 9.37A5 5 0 0 0 10.60 3.63" stroke="#f6f6f6" stroke-width="1.200" fill="none"/><path d="M10.27 3.86A4.6 4.6 0 0 0 2.73 9.14" stroke="#5c646c" stroke-width="1.900" fill="none"/></svg>
<span class="t" style="left:1137.80px;top:780px;font-size:11px;line-height:11px;color:#000;letter-spacing:-0.265px;">Spatial</span>
<svg style="left:1119px;top:796px;" width="13" height="13"><circle cx="6.500" cy="6.500" r="5.400" fill="#e4e4e4"/><path d="M2.40 9.37A5 5 0 0 0 10.60 3.63" stroke="#f6f6f6" stroke-width="1.200" fill="none"/><path d="M10.27 3.86A4.6 4.6 0 0 0 2.73 9.14" stroke="#5c646c" stroke-width="1.900" fill="none"/></svg>
<span class="t" style="left:1137.80px;top:798px;font-size:11px;line-height:11px;color:#000;letter-spacing:-0.372px;">Curvature</span>
<svg style="left:1119px;top:814px;" width="13" height="13"><circle cx="6.500" cy="6.500" r="5.400" fill="#e4e4e4"/><path d="M2.40 9.37A5 5 0 0 0 10.60 3.63" stroke="#f6f6f6" stroke-width="1.200" fill="none"/><path d="M10.27 3.86A4.6 4.6 0 0 0 2.73 9.14" stroke="#5c646c" stroke-width="1.900" fill="none"/><circle cx="6.500" cy="6.500" r="2.600" fill="#000"/></svg>
<span class="t" style="left:1137.80px;top:816px;font-size:11px;line-height:11px;color:#000;letter-spacing:-0.244px;">Spatial and Curvature</span>
<span class="t" style="left:1138.50px;top:833px;font-size:11px;line-height:11px;color:#000;letter-spacing:-0.400px;">Edge:</span>
<div style="left:1188px;top:832px;width:53px;height:15px;background:#e2e2e2;box-shadow:inset 1px 1px 0 #5a5a5a,inset 2px 2px 0 #111,inset -1px -1px 0 #f4f4f4;"></div>
<span class="t" style="left:1192.90px;top:833px;font-size:11px;line-height:11px;color:#000;">20,0</span>
<div style="left:1243px;top:832px;width:11px;height:7px;background:#c9c9c9;box-shadow:inset 1px 1px 0 #f4f4f4,inset -1px -1px 0 #6a6a6a;"></div>
<svg style="left:1245px;top:833px;" width="7" height="4"><path d="M0 3.5L3 0L6 3.5z" fill="#000"/></svg>
<div style="left:1243px;top:839px;width:11px;height:8px;background:#c9c9c9;box-shadow:inset 1px 1px 0 #f4f4f4,inset -1px -1px 0 #6a6a6a;"></div>
<svg style="left:1245px;top:841px;" width="7" height="4"><path d="M0 0L3 3.5L6 0z" fill="#000"/></svg>
<span class="t" style="left:1138.50px;top:854px;font-size:11px;line-height:11px;color:#000;letter-spacing:-0.387px;">Distance:</span>
<div style="left:1188px;top:853px;width:53px;height:15px;background:#e2e2e2;box-shadow:inset 1px 1px 0 #5a5a5a,inset 2px 2px 0 #111,inset -1px -1px 0 #f4f4f4;"></div>
<span class="t" style="left:1192.90px;top:854px;font-size:11px;line-height:11px;color:#000;">20,0</span>
<div style="left:1243px;top:853px;width:11px;height:7px;background:#c9c9c9;box-shadow:inset 1px 1px 0 #f4f4f4,inset -1px -1px 0 #6a6a6a;"></div>
<svg style="left:1245px;top:854px;" width="7" height="4"><path d="M0 3.5L3 0L6 3.5z" fill="#000"/></svg>
<div style="left:1243px;top:860px;width:11px;height:8px;background:#c9c9c9;box-shadow:inset 1px 1px 0 #f4f4f4,inset -1px -1px 0 #6a6a6a;"></div>
<svg style="left:1245px;top:862px;" width="7" height="4"><path d="M0 0L3 3.5L6 0z" fill="#000"/></svg>
<div style="left:1100px;top:872px;width:175px;height:10px;overflow:hidden">
<span class="t" style="left:38.50px;top:1px;font-size:11px;line-height:11px;color:#000;letter-spacing:-0.400px;">Angle:</span>
<div style="left:88px;top:2px;width:53px;height:15px;background:#e2e2e2;box-shadow:inset 1px 1px 0 #5a5a5a,inset 2px 2px 0 #111"></div>
<span class="t" style="left:92.90px;top:3px;font-size:11px;line-height:11px;color:#000;">15,0</span>
<div style="left:143px;top:2px;width:11px;height:8px;background:#c9c9c9;box-shadow:inset 1px 1px 0 #f4f4f4,inset -1px 0 0 #6a6a6a"></div>
<svg style="left:145px;top:4px" width="7" height="4"><path d="M0 3.5L3 0L6 3.5z" fill="#000"/></svg>
</div>
<div style="left:40px;top:845px;width:1056px;height:18px;background:#c1c1c1;"></div>
<div style="left:41px;top:845px;width:14px;height:17px;background:#c5c5c5;box-shadow:inset 1px 1px 0 #f6f6f6,inset -1px -1px 0 #6a6a6a;"></div>
<svg style="left:44px;top:850px;" width="7" height="8"><path d="M5 0.500L1.200 3.700L5 7" stroke="#000" stroke-width="1" fill="none"/></svg>
<div style="left:56px;top:845px;width:125px;height:17px;background:#c5c5c5;box-shadow:inset 1px 1px 0 #f6f6f6,inset -1px -1px 0 #1a1a1a,inset -2px -2px 0 #6a6a6a;"></div>
<span class="t" style="left:101.40px;top:849px;font-size:11px;line-height:11px;color:#000;letter-spacing:0.280px;">0 / 100</span>
<div style="left:182px;top:845px;width:14px;height:17px;background:#c5c5c5;box-shadow:inset 1px 1px 0 #f6f6f6,inset -1px -1px 0 #6a6a6a;"></div>
<svg style="left:186px;top:850px;" width="7" height="8"><path d="M1.200 0.500L5 3.700L1.200 7" stroke="#000" stroke-width="1" fill="none"/></svg>
<div style="left:40px;top:863px;width:1056px;height:1px;background:#f2f2f2;"></div>
<div style="left:40px;top:864px;width:1056px;height:26px;background:#c6c6c6;"></div>
<svg style="left:53px;top:869px;" width="18" height="16"><rect x="0.5" y="0.5" width="16" height="5" fill="#dcdcdc" stroke="#000"/><path d="M2 3.5c2-2 3 1 5 0s3-1.5 4 0 3 .5 4-.5" stroke="#000" fill="none" stroke-width="0.8"/><path d="M5 7.5v5M3 9.5l2-2 2 2M12 7.5v5M10 10.5l2 2 2-2" stroke="#000" fill="none"/><rect x="0.5" y="13.5" width="16" height="2" fill="#fff" stroke="#000"/></svg>
<div style="left:90px;top:865px;width:9px;height:25px;background:#8fb0cf;box-shadow:inset 1px 0 0 #56708c,inset -1px 0 0 #56708c;"></div>
<div style="left:94px;top:865px;width:1px;height:25px;background:#4a6482;"></div>
<svg style="left:40px;top:864px;" width="1060" height="26"><path d="M64.5 1V12M73.5 1V12M83.5 1V12M92.5 1V12M111.5 1V12M121.5 1V12M130.5 1V12M140.5 1V12M159.5 1V12M168.5 1V12M178.5 1V12M187.5 1V12M206.5 1V12M215.5 1V12M225.5 1V12M234.5 1V12M253.5 1V12M263.5 1V12M272.5 1V12M282.5 1V12M301.5 1V12M310.5 1V12M320.5 1V12M329.5 1V12M348.5 1V12M358.5 1V12M367.5 1V12M377.5 1V12M395.5 1V12M405.5 1V12M414.5 1V12M424.5 1V12M443.5 1V12M452.5 1V12M462.5 1V12M471.5 1V12M490.5 1V12M500.5 1V12M509.5 1V12M519.5 1V12M538.5 1V12M547.5 1V12M557.5 1V12M566.5 1V12M585.5 1V12M594.5 1V12M604.5 1V12M613.5 1V12M632.5 1V12M642.5 1V12M651.5 1V12M661.5 1V12M680.5 1V12M689.5 1V12M699.5 1V12M708.5 1V12M727.5 1V12M737.5 1V12M746.5 1V12M755.5 1V12M774.5 1V12M784.5 1V12M793.5 1V12M803.5 1V12M822.5 1V12M831.5 1V12M841.5 1V12M850.5 1V12M869.5 1V12M879.5 1V12M888.5 1V12M898.5 1V12M917.5 1V12M926.5 1V12M935.5 1V12M945.5 1V12M964.5 1V12M973.5 1V12M983.5 1V12M992.5 1V12M102.5 1V26M149.5 1V26M197.5 1V26M244.5 1V26M291.5 1V26M339.5 1V26M386.5 1V26M433.5 1V26M481.5 1V26M528.5 1V26M575.5 1V26M623.5 1V26M670.5 1V26M718.5 1V26M765.5 1V26M812.5 1V26M860.5 1V26M907.5 1V26M954.5 1V26M1002.5 1V26" stroke="#7e7e7e" stroke-width="1" shape-rendering="crispEdges" fill="none"/></svg>
<span class="t" style="left:91.70px;top:878px;font-size:11px;line-height:11px;color:#000;">0</span>
<span class="t" style="left:139.07px;top:878px;font-size:11px;line-height:11px;color:#000;">5</span>
<span class="t" style="left:183.38px;top:878px;font-size:11px;line-height:11px;color:#000;">10</span>
<span class="t" style="left:230.75px;top:878px;font-size:11px;line-height:11px;color:#000;">15</span>
<span class="t" style="left:278.12px;top:878px;font-size:11px;line-height:11px;color:#000;">20</span>
<span class="t" style="left:325.49px;top:878px;font-size:11px;line-height:11px;color:#000;">25</span>
<span class="t" style="left:372.86px;top:878px;font-size:11px;line-height:11px;color:#000;">30</span>
<span class="t" style="left:420.23px;top:878px;font-size:11px;line-height:11px;color:#000;">35</span>
<span class="t" style="left:467.60px;top:878px;font-size:11px;line-height:11px;color:#000;">40</span>
<span class="t" style="left:514.97px;top:878px;font-size:11px;line-height:11px;color:#000;">45</span>
<span class="t" style="left:562.34px;top:878px;font-size:11px;line-height:11px;color:#000;">50</span>
<span class="t" style="left:609.71px;top:878px;font-size:11px;line-height:11px;color:#000;">55</span>
<span class="t" style="left:657.08px;top:878px;font-size:11px;line-height:11px;color:#000;">60</span>
<span class="t" style="left:704.45px;top:878px;font-size:11px;line-height:11px;color:#000;">65</span>
<span class="t" style="left:751.82px;top:878px;font-size:11px;line-height:11px;color:#000;">70</span>
<span class="t" style="left:799.19px;top:878px;font-size:11px;line-height:11px;color:#000;">75</span>
<span class="t" style="left:846.56px;top:878px;font-size:11px;line-height:11px;color:#000;">80</span>
<span class="t" style="left:893.93px;top:878px;font-size:11px;line-height:11px;color:#000;">85</span>
<span class="t" style="left:941.30px;top:878px;font-size:11px;line-height:11px;color:#000;">90</span>
<span class="t" style="left:988.67px;top:878px;font-size:11px;line-height:11px;color:#000;">95</span>
<span class="t" style="left:1032.98px;top:878px;font-size:11px;line-height:11px;color:#000;">100</span>
<div style="left:0px;top:889px;width:1100px;height:1px;background:#8a8a8a;"></div>
<div style="left:0px;top:890px;width:1100px;height:1px;background:#f2f2f2;"></div>
<div style="left:1096px;top:889px;width:184px;height:1px;background:#7a7a7a;"></div>
<div style="left:1096px;top:890px;width:184px;height:1px;background:#eeeeee;"></div>
<div style="left:2px;top:893px;width:96px;height:21px;background:#e2c6c6;box-shadow:inset 1px 1px 0 #7a7a7a,inset -1px -1px 0 #f8f8f8;"></div>
<div style="left:2px;top:916px;width:96px;height:21px;background:#ffffff;box-shadow:inset 1px 1px 0 #7a7a7a,inset -1px -1px 0 #f0f0e8;"></div>
<div style="left:101px;top:891px;width:1px;height:48px;background:#f4f4f4;"></div>
<div style="left:102px;top:891px;width:1px;height:48px;background:#7a7a7a;"></div>
<div style="left:104px;top:891px;width:1px;height:48px;background:#f4f4f4;"></div>
<div style="left:105px;top:891px;width:1px;height:48px;background:#9a9a9a;"></div>
<div style="left:107px;top:894px;width:327px;height:21px;background:#c5c5c5;box-shadow:inset 1px 1px 0 #7a7a7a,inset -1px -1px 0 #f4f4f4;"></div>
<span class="t" style="left:113.40px;top:900px;font-size:11px;line-height:11px;color:#000;letter-spacing:-0.101px;">1 Object Selected</span>
<div style="left:107px;top:919px;width:830px;height:20px;background:#c5c5c5;box-shadow:inset 1px 1px 0 #7a7a7a;"></div>
<span class="t" style="left:113.40px;top:924px;font-size:11px;line-height:11px;color:#000;letter-spacing:-0.215px;">Click and</span>
<svg style="left:443px;top:897px;" width="10" height="13"><path d="M2.5 6V3.5a2.5 2.5 0 0 1 5 0V6" stroke="#222" stroke-width="1.4" fill="none"/><rect x="0.5" y="5.5" width="9" height="7" fill="#3a3a3a"/><path d="M1 7.5h8M1 9.5h8M1 11.5h8" stroke="#d0d0d0" stroke-width="0.8"/></svg>
<svg style="left:467px;top:896px;" width="17" height="16"><rect x="0.600" y="0.600" width="15" height="14.500" fill="none" stroke="#000" stroke-width="1.200"/><path d="M8 1v14M1 8h15" stroke="#000" stroke-width="0.700"/><circle cx="8" cy="8" r="2" fill="#444"/></svg>
<span class="t" style="left:490.80px;top:900px;font-size:11px;line-height:11px;color:#222;letter-spacing:-0.400px;">X:</span>
<div style="left:501px;top:894px;width:57px;height:21px;background:#e2e2e2;box-shadow:inset 1px 1px 0 #5a5a5a,inset 2px 2px 0 #111,inset -1px -1px 0 #f4f4f4;"></div>
<span class="t" style="left:505.60px;top:900px;font-size:11px;line-height:11px;color:#000;">-2,404mm</span>
<div style="left:560px;top:897px;width:11px;height:7px;background:#c9c9c9;box-shadow:inset 1px 1px 0 #f4f4f4,inset -1px -1px 0 #6a6a6a;"></div>
<svg style="left:562px;top:898px;" width="7" height="4"><path d="M0 3.5L3 0L6 3.5z" fill="#000"/></svg>
<div style="left:560px;top:904px;width:11px;height:7px;background:#c9c9c9;box-shadow:inset 1px 1px 0 #f4f4f4,inset -1px -1px 0 #6a6a6a;"></div>
<svg style="left:562px;top:905px;" width="7" height="4"><path d="M0 0L3 3.5L6 0z" fill="#000"/></svg>
<span class="t" style="left:573.50px;top:900px;font-size:11px;line-height:11px;color:#222;letter-spacing:-0.400px;">Y:</span>
<div style="left:583px;top:894px;width:57px;height:21px;background:#e2e2e2;box-shadow:inset 1px 1px 0 #5a5a5a,inset 2px 2px 0 #111,inset -1px -1px 0 #f4f4f4;"></div>
<span class="t" style="left:587.50px;top:900px;font-size:11px;line-height:11px;color:#000;">26,017mm</span>
<div style="left:642px;top:897px;width:11px;height:7px;background:#c9c9c9;box-shadow:inset 1px 1px 0 #f4f4f4,inset -1px -1px 0 #6a6a6a;"></div>
<svg style="left:644px;top:898px;" width="7" height="4"><path d="M0 3.5L3 0L6 3.5z" fill="#000"/></svg>
<div style="left:642px;top:904px;width:11px;height:7px;background:#c9c9c9;box-shadow:inset 1px 1px 0 #f4f4f4,inset -1px -1px 0 #6a6a6a;"></div>
<svg style="left:644px;top:905px;" width="7" height="4"><path d="M0 0L3 3.5L6 0z" fill="#000"/></svg>
<span class="t" style="left:654.50px;top:900px;font-size:11px;line-height:11px;color:#222;letter-spacing:-0.400px;">Z:</span>
<div style="left:665px;top:894px;width:57px;height:21px;background:#e2e2e2;box-shadow:inset 1px 1px 0 #5a5a5a,inset 2px 2px 0 #111,inset -1px -1px 0 #f4f4f4;"></div>
<span class="t" style="left:669.50px;top:900px;font-size:11px;line-height:11px;color:#000;">16,014mm</span>
<div style="left:724px;top:897px;width:11px;height:7px;background:#c9c9c9;box-shadow:inset 1px 1px 0 #f4f4f4,inset -1px -1px 0 #6a6a6a;"></div>
<svg style="left:726px;top:898px;" width="7" height="4"><path d="M0 3.5L3 0L6 3.5z" fill="#000"/></svg>
<div style="left:724px;top:904px;width:11px;height:7px;background:#c9c9c9;box-shadow:inset 1px 1px 0 #f4f4f4,inset -1px -1px 0 #6a6a6a;"></div>
<svg style="left:726px;top:905px;" width="7" height="4"><path d="M0 0L3 3.5L6 0z" fill="#000"/></svg>
<div style="left:737px;top:894px;width:99px;height:21px;background:#c5c5c5;box-shadow:inset 1px 1px 0 #7a7a7a,inset -1px -1px 0 #f4f4f4;"></div>
<span class="t" style="left:743.50px;top:900px;font-size:11px;line-height:11px;color:#000;letter-spacing:-0.400px;">Grid = 10,0mm</span>
<div style="left:737px;top:919px;width:99px;height:20px;background:#c5c5c5;box-shadow:inset 1px 1px 0 #7a7a7a,inset -1px -1px 0 #f4f4f4;"></div>
<span class="t" style="left:743.50px;top:924px;font-size:11px;line-height:11px;color:#000;letter-spacing:-0.049px;">Add Time Tag</span>
<div style="left:838px;top:893px;width:44px;height:44px;background:#c5c5c5;box-shadow:inset 1px 1px 0 #f6f6f6,inset -1px -1px 0 #6a6a6a;"></div>
<svg style="left:847px;top:908px;" width="27" height="13"><circle cx="5" cy="6.500" r="3.700" fill="none" stroke="#000" stroke-width="1.900"/><path d="M8.700 6.500H25" stroke="#000" stroke-width="2.200" fill="none"/><path d="M20 6.500v4.500M23.800 6.500v4" stroke="#000" stroke-width="2" fill="none"/></svg>
<div style="left:886px;top:893px;width:47px;height:22px;background:#c5c5c5;box-shadow:inset 1px 1px 0 #f6f6f6,inset -1px -1px 0 #6a6a6a;"></div>
<span class="t" style="left:888.50px;top:900px;font-size:11px;line-height:11px;color:#000;letter-spacing:-0.377px;">Auto Key</span>
<div style="left:886px;top:916px;width:47px;height:21px;background:#c5c5c5;box-shadow:inset 1px 1px 0 #f6f6f6,inset -1px -1px 0 #6a6a6a;"></div>
<span class="t" style="left:891.60px;top:922px;font-size:11px;line-height:11px;color:#000;letter-spacing:-0.400px;">Set Key</span>
<div style="left:936px;top:893px;width:114px;height:21px;background:#e3e3e3;box-shadow:inset 1px 1px 0 #7c7c7c,inset 2px 2px 0 #3c3c3c,inset -1px -1px 0 #f4f4f4;"></div>
<div style="left:1032px;top:895px;width:16px;height:17px;background:#dedede;box-shadow:inset 1px 1px 0 #fff,inset -1px -1px 0 #6a6a60,inset -2px -2px 0 #a8a8a0;"></div>
<svg style="left:1036px;top:902px;" width="8" height="5"><path d="M0 0h8l-4 4.5z" fill="#000"/></svg>
<span class="t" style="left:941.00px;top:899px;font-size:11px;line-height:11px;color:#000;letter-spacing:-0.241px;">Selected</span>
<svg style="left:939px;top:919px;" width="18" height="17"><path d="M1 14.500h7M7.500 1.500h7" stroke="#7080d8" stroke-width="1.200" stroke-dasharray="2 1"/><path d="M1.500 6L4.500 14L10.500 1.500L14.500 8" stroke="#d83030" stroke-width="1.300" fill="none"/><rect x="3.500" y="13.200" width="2" height="1.600" fill="#333"/><rect x="9.500" y="0.800" width="2" height="1.600" fill="#333"/><path d="M14 16.500h3.500V13z" fill="#000"/></svg>
<div style="left:962px;top:916px;width:90px;height:21px;background:#c5c5c5;box-shadow:inset 1px 1px 0 #f6f6f6,inset -1px -1px 0 #6a6a6a;"></div>
<span class="t" style="left:979.20px;top:922px;font-size:11px;line-height:11px;color:#000;letter-spacing:-0.328px;">Key Filters...</span>
<svg style="left:1060px;top:900px;" width="17" height="8"><path d="M0 0h2v8H0zM9 0v8L2.5 4zM16 0v8L9.5 4z" fill="#000"/></svg>
<div style="left:1081px;top:896px;width:1px;height:16px;background:#7a7a7a;"></div>
<div style="left:1082px;top:896px;width:1px;height:16px;background:#f2f2f2;"></div>
<svg style="left:1088px;top:900px;" width="14" height="8"><path d="M6 0v8L0 4zM7.500 0h1.700v8H7.500zM10.500 0h1.700v8h-1.700z" fill="#000"/></svg>
<div style="left:1109px;top:896px;width:16px;height:15px;box-shadow:inset 0 0 0 2px #000;"></div>
<svg style="left:1114px;top:900px;" width="7" height="8"><path d="M0 0L7 4L0 8z" fill="#000"/></svg>
<svg style="left:1124px;top:910px;" width="4" height="4"><path d="M0 3.500h3.500V0z" fill="#000"/></svg>
<svg style="left:1132px;top:900px;" width="14" height="8"><path d="M0 0h1.700v8H0zM3 0h1.700v8H3zM6.500 0v8L13 4z" fill="#000"/></svg>
<div style="left:1152px;top:896px;width:1px;height:16px;background:#7a7a7a;"></div>
<div style="left:1153px;top:896px;width:1px;height:16px;background:#f2f2f2;"></div>
<svg style="left:1158px;top:900px;" width="17" height="8"><path d="M0 0v8L6.500 4zM7 0v8L13.500 4zM14.500 0h2v8h-2z" fill="#000"/></svg>
<div style="left:1182px;top:896px;width:1px;height:16px;background:#7a7a7a;"></div>
<div style="left:1183px;top:896px;width:1px;height:16px;background:#f2f2f2;"></div>
<svg style="left:1063px;top:921px;" width="12" height="9"><path d="M0 0h1.500v9H0zM10.500 0H12v9h-1.500zM5.500 1.500v6L1.500 4.500zM6.500 1.500v6L10.500 4.500z" fill="#000"/></svg>
<div style="left:1083px;top:916px;width:63px;height:21px;background:#e2e2e2;box-shadow:inset 1px 1px 0 #5a5a5a,inset 2px 2px 0 #111,inset -1px -1px 0 #f4f4f4;"></div>
<span class="t" style="left:1087.50px;top:922px;font-size:11px;line-height:11px;color:#000;">0</span>
<div style="left:1148px;top:919px;width:9px;height:8px;background:#c9c9c9;box-shadow:inset 1px 1px 0 #f4f4f4,inset -1px -1px 0 #6a6a6a;"></div>
<svg style="left:1149px;top:921px;" width="7" height="4"><path d="M0 3.5L3 0L6 3.5z" fill="#000"/></svg>
<div style="left:1148px;top:927px;width:9px;height:8px;background:#c9c9c9;box-shadow:inset 1px 1px 0 #f4f4f4,inset -1px -1px 0 #6a6a6a;"></div>
<svg style="left:1149px;top:929px;" width="7" height="4"><path d="M0 0L3 3.5L6 0z" fill="#000"/></svg>
<svg style="left:1164px;top:919px;" width="16" height="15"><rect x="0.5" y="0.5" width="11" height="12" fill="#d8d8d8" stroke="#000"/><rect x="0.5" y="0.500" width="11" height="2.500" fill="#000"/><circle cx="10" cy="9.500" r="4.200" fill="#e8e8e8" stroke="#c00000" stroke-width="1.200"/><path d="M10 7v2.500h2" stroke="#c00000" fill="none"/></svg>
<div style="left:1182px;top:919px;width:1px;height:16px;background:#7a7a7a;"></div>
<div style="left:1183px;top:919px;width:1px;height:16px;background:#f2f2f2;"></div>
<svg style="left:1187px;top:896px;" width="17" height="16"><circle cx="6" cy="5.500" r="4.300" fill="#f2f4ff" stroke="#28288c" stroke-width="1"/><path d="M3.500 5a2.600 2.600 0 0 1 2.300-2.200" stroke="#9aa4d8" fill="none"/><path d="M9.300 8.800l4.800 4.800" stroke="#2038c0" stroke-width="2"/></svg>
<svg style="left:1209px;top:895px;" width="18" height="17"><path d="M4.500 1.500h12v10h-12zM10.500 1.500v10M4.500 6.500h12" stroke="#9a2a2a" fill="none" shape-rendering="crispEdges"/><circle cx="5" cy="10" r="3.300" fill="#e4e8ff" stroke="#28288c" stroke-width="1"/><path d="M7.500 12.500l3.200 3.200" stroke="#2038c0" stroke-width="1.600"/></svg>
<svg style="left:1233px;top:895px;" width="18" height="18"><path d="M0.500 4.500V1.500H3.500M12.500 1.500h3v3M0.500 12.500v3h3M12.500 15.500h3v-3" stroke="#1a1a50" fill="none" shape-rendering="crispEdges"/><path d="M3.500 6.500h7v7h-7z" fill="#fff" stroke="#28288c"/><path d="M3.500 6.500l2.500-3h7l-2.500 3zM10.500 6.500l2.500-3v7l-2.500 3z" stroke="#28288c" fill="#e0e0f4"/><path d="M14 17.5h3.500v-3.500z" fill="#000"/></svg>
<svg style="left:1255px;top:895px;" width="20" height="18"><path d="M5.500 1.500h12v10h-12zM11.500 1.500v10M5.500 6.500h12" stroke="#9a2a2a" fill="none" shape-rendering="crispEdges"/><path d="M1.500 9.500h7v7h-7z" fill="#eef" stroke="#28288c"/><path d="M1.500 9.500l2.500-3h7l-2.500 3zM8.500 9.500l2.500-3v7l-2.500 3z" stroke="#28288c" fill="#d8d8f0"/><path d="M16 17.5h3.500v-3.500z" fill="#000"/></svg>
<svg style="left:1187px;top:918px;" width="20" height="18"><path d="M0.700 1L15.500 8L0.700 15z" fill="#b4b4b4" stroke="#000" stroke-width="1"/><path d="M7.500 4.500a5 5 0 0 1 0 7" stroke="#000" fill="#c5c5c5" stroke-width="0.900"/><path d="M15 17.0h3.500v-3.500z" fill="#000"/></svg>
<svg style="left:1210px;top:918px;" width="20" height="18"><path d="M4.500 9V4.500a1 1 0 0 1 2 0V8V2.500a1 1 0 0 1 2 0V8V2a1 1 0 0 1 2 0V8V3.500a1 1 0 0 1 2 0V11c0 3-2 4.500-5 4.500S3.500 13 1.500 10c-.5-1 .8-1.800 1.500-.8z" fill="#dedede" stroke="#000" stroke-width="0.800"/><path d="M15.5 17.0h3.500v-3.500z" fill="#000"/></svg>
<svg style="left:1233px;top:918px;" width="20" height="18"><circle cx="7.500" cy="8.500" r="4" stroke="#000" fill="none" stroke-width="0.800"/><path d="M7.500 2v6.500M7.500 8.500L1.500 14.500M7.500 8.500h7" stroke="#2030b0" stroke-width="1.100" fill="none"/><path d="M7.500 0.500l-2 3h4zM0.500 15.500l.8-3 2.200 2.200zM16 8.500l-3-2v4z" fill="#2030b0"/><path d="M15.5 17.0h3.500v-3.500z" fill="#000"/></svg>
<svg style="left:1256px;top:917px;" width="18" height="18"><rect x="1.500" y="1.500" width="11" height="11" fill="none" stroke="#28288c" stroke-width="1"/><rect x="9.500" y="9.500" width="6" height="6" fill="#c5c5c5" stroke="#1a1a50" stroke-width="1"/><path d="M4.500 4.500l4.500 4.500M4.500 7V4.500H7M9 6.500V9H6.500" stroke="#28288c" fill="none" stroke-width="0.900"/></svg>
<svg style="left:12px;top:32px;" width="24" height="23"><defs><linearGradient id="ug" x1="1" y1="0" x2="0" y2="0"><stop offset="0" stop-color="#4c4c4c"/><stop offset="0.450" stop-color="#8e8e8e"/><stop offset="1" stop-color="#b4b4b4"/></linearGradient><linearGradient id="ug3" x1="0" y1="0" x2="1" y2="0"><stop offset="0" stop-color="#4c4c4c"/><stop offset="0.450" stop-color="#8e8e8e"/><stop offset="1" stop-color="#b4b4b4"/></linearGradient><linearGradient id="ug2" x1="0" y1="0" x2="1" y2="1"><stop offset="0" stop-color="#ffffff"/><stop offset="1" stop-color="#a8a8a8"/></linearGradient></defs><path d="M23 11A9 9 0 0 0 5 11H9A5 5 0 0 1 19 11z" fill="url(#ug)" stroke="#3e3e3e" stroke-width="0.700"/><path d="M1 10.500H13L7 21.500z" fill="url(#ug2)" stroke="#3a3a3a" stroke-width="1"/></svg>
<svg style="left:44px;top:32px;" width="24" height="23"><g transform="translate(24 0) scale(-1 1)"><path d="M23 11A9 9 0 0 0 5 11H9A5 5 0 0 1 19 11z" fill="url(#ug)" stroke="#3e3e3e" stroke-width="0.700"/><path d="M1 10.500H13L7 21.500z" fill="url(#ug2)" stroke="#3a3a3a" stroke-width="1"/></g></svg>
<div style="left:75px;top:38px;width:1px;height:16px;background:#7a7a7a;"></div>
<div style="left:76px;top:38px;width:1px;height:16px;background:#f2f2f2;"></div>
<svg style="left:83px;top:33px;" width="24" height="24"><rect x="0.500" y="0.500" width="8.5" height="8.5" rx="1" fill="url(#bxg)" stroke="#5a5a9a" stroke-width="0.900"/><rect x="13.500" y="14.500" width="8.5" height="8.5" rx="1" fill="url(#bxg)" stroke="#5a5a9a" stroke-width="0.900"/><path d="M7 8c1.500-1.500 4-1 4.500 1s-1 3.500-3 3-2.500-2.500-1.500-4zM10.500 12c1.500-1.500 4-1 4.500 1s-1 3.500-3 3-2.500-2.500-1.500-4z" stroke="#d01818" stroke-width="1.300" fill="none"/></svg>
<svg style="left:114px;top:33px;" width="24" height="24"><rect x="0.500" y="0.500" width="8.5" height="8.5" rx="1" fill="url(#bxg)" stroke="#5a5a9a" stroke-width="0.900"/><rect x="13.500" y="14.500" width="8.5" height="8.5" rx="1" fill="url(#bxg)" stroke="#5a5a9a" stroke-width="0.900"/><path d="M8 9a2.500 2.500 0 0 1 3.500-2" stroke="#d01818" stroke-width="1.400" fill="none"/><path d="M6 13a3 3 0 0 0 4 4M13 5.500l1.500-2M16.500 6l2-1M14 9.500h3" stroke="#d84040" stroke-width="1.200" stroke-dasharray="1.200 1.200" fill="none"/></svg>
<svg style="left:146px;top:32px;" width="26" height="26"><path d="M1.500 8.500c2-2.500 4 1.500 6-.5s3-1.500 4-.5M1.500 14.500c2-3 4 0 6-1.500s3-2 4.500-1M5 23c0-3 1-5 3-5.500s3 0 4-1M13.500 5.500c.5-2.500 2-3 3-3.500s2 0 3-1M15 13c0-3 1-4 2-5s1.500-1 2-2" stroke="#1e2a78" stroke-width="1.100" fill="none"/><path d="M10 7.500A4.300 4.300 0 1 0 5 10M10 7.500c1 3 1.500 6 4.500 8.500" stroke="#d82020" stroke-width="1.200" fill="none"/><rect x="14.500" y="15.500" width="8.5" height="8.5" rx="1" fill="url(#bxg)" stroke="#5a5a9a" stroke-width="0.900"/></svg>
<div style="left:177px;top:38px;width:1px;height:16px;background:#7a7a7a;"></div>
<div style="left:178px;top:38px;width:1px;height:16px;background:#f2f2f2;"></div>
<div style="left:180px;top:30px;width:69px;height:21px;background:#e3e3e3;box-shadow:inset 1px 1px 0 #7c7c7c,inset 2px 2px 0 #3c3c3c,inset -1px -1px 0 #f4f4f4;"></div>
<div style="left:231px;top:32px;width:16px;height:17px;background:#dedede;box-shadow:inset 1px 1px 0 #fff,inset -1px -1px 0 #6a6a60,inset -2px -2px 0 #a8a8a0;"></div>
<svg style="left:235px;top:38px;" width="8" height="5"><path d="M0 0h8l-4 4.5z" fill="#000"/></svg>
<span class="t" style="left:183.80px;top:36px;font-size:11px;line-height:11px;color:#000;">All</span>
<svg style="left:260px;top:34px;" width="14" height="23"><defs><linearGradient id="cg" x1="0" y1="0" x2="1" y2="0"><stop offset="0" stop-color="#fff"/><stop offset="1" stop-color="#b0b0b0"/></linearGradient></defs><path d="M1.500 0.500V17L5 13.500L7.500 21L10 20L7.500 12.800H12z" fill="url(#cg)" stroke="#4a4a4a" stroke-width="1"/></svg>
<svg style="left:287px;top:34px;" width="24" height="24"><path d="M1 1.5h17M1 3.5h13M1 5.5h9M1 7.5h8M1 9.5h8M1 11.5h8M1 13.5h8M1 15.5h8M1 17.5h9M1 19.5h9M1 21.5h9" stroke="#000" stroke-width="1" shape-rendering="crispEdges"/><path transform="translate(13 6) scale(0.85)" d="M0 0V15L3.500 11.500L6 17.500L8.500 16.500L6 10.700H11z" fill="#f4f4f4" stroke="#555" stroke-width="1"/></svg>
<svg style="left:319px;top:33px;" width="26" height="26"><rect x="3.500" y="4.500" width="15" height="15" fill="#dedeee" stroke="#b4b4c4" stroke-width="1"/><rect x="1" y="2" width="20.500" height="20" fill="none" stroke="#000" stroke-width="2" stroke-dasharray="2 2.100" shape-rendering="crispEdges"/><path d="M22 25h3v-3z" fill="#000"/></svg>
<svg style="left:351px;top:33px;" width="27" height="26"><rect x="3.500" y="4.500" width="13" height="15" fill="#dedeee" stroke="#b4b4c4" stroke-width="1"/><rect x="1" y="2" width="16.500" height="20" fill="none" stroke="#000" stroke-width="2" stroke-dasharray="2 2.100" shape-rendering="crispEdges"/><circle cx="17.200" cy="11.800" r="5.300" fill="#111"/><circle cx="17.200" cy="11.800" r="1.400" fill="#fff"/></svg>
<div style="left:381px;top:38px;width:1px;height:16px;background:#7a7a7a;"></div>
<div style="left:382px;top:38px;width:1px;height:16px;background:#f2f2f2;"></div>
<div style="left:384px;top:30px;width:31px;height:31px;background:#efc84a;box-shadow:inset 1px 1px 0 #6a6a6a,inset -1px -1px 0 #f4f4f4,inset 2px 2px 0 #c5c5c5,inset -2px -2px 0 #c5c5c5;"></div>
<svg style="left:389px;top:35px;" width="22" height="22"><path d="M11 0.500L15 5.500H12.200V9.800H16.500V7L21.500 11L16.500 15V12.200H12.200V16.500H15L11 21.500L7 16.500H9.800V12.200H5.500V15L0.500 11L5.500 7V9.800H9.800V5.500H7z" fill="#5a5a5a" stroke="#2c2c2c" stroke-width="0.700"/><path d="M11 2L13.500 5H8.500zM2 11L5 8.500v5zM20 11L17 8.500v5zM11 20L8.500 17h5z" fill="#8c8c8c"/></svg>
<svg style="left:421px;top:33px;" width="23" height="24"><defs><linearGradient id="rg" x1="0" y1="0.300" x2="1" y2="0.700"><stop offset="0" stop-color="#d8d8d8"/><stop offset="0.350" stop-color="#8a8a8a"/><stop offset="1" stop-color="#2e2e2e"/></linearGradient></defs><path d="M15.200 5.500A8.400 8.400 0 1 1 4.600 7.400" stroke="#2a2a2a" stroke-width="4.400" fill="none"/><path d="M15.200 5.500A8.400 8.400 0 1 1 4.600 7.400" stroke="url(#rg)" stroke-width="3.200" fill="none"/><path d="M1 3L10.200 1.200L8 9.500z" fill="#4a4a4a" stroke="#2a2a2a" stroke-width="0.700"/></svg>
<svg style="left:453px;top:36px;" width="26" height="24"><defs><linearGradient id="sg" x1="0" y1="0" x2="1" y2="1"><stop offset="0" stop-color="#9a9a9a"/><stop offset="1" stop-color="#2e2e2e"/></linearGradient></defs><rect x="9" y="1" width="12" height="16" fill="url(#sg)"/><rect x="1.700" y="8.700" width="12.600" height="8" fill="#f6f6f6" stroke="#d42020" stroke-width="1.400"/><path d="M22 23h3v-3z" fill="#000"/></svg>
<div style="left:480px;top:30px;width:69px;height:21px;background:#e3e3e3;box-shadow:inset 1px 1px 0 #7c7c7c,inset 2px 2px 0 #3c3c3c,inset -1px -1px 0 #f4f4f4;"></div>
<div style="left:531px;top:32px;width:16px;height:17px;background:#dedede;box-shadow:inset 1px 1px 0 #fff,inset -1px -1px 0 #6a6a60,inset -2px -2px 0 #a8a8a0;"></div>
<svg style="left:535px;top:38px;" width="8" height="5"><path d="M0 0h8l-4 4.5z" fill="#000"/></svg>
<span class="t" style="left:484.50px;top:36px;font-size:11px;line-height:11px;color:#000;">View</span>
<svg style="left:555px;top:34px;" width="27" height="26"><defs><linearGradient id="pg" x1="0" y1="0" x2="0" y2="1"><stop offset="0" stop-color="#6a6a6a"/><stop offset="1" stop-color="#c8c8c8"/></linearGradient></defs><rect x="1.500" y="1.500" width="8" height="17" fill="url(#pg)" stroke="#1a1a80" stroke-width="1.200"/><path d="M2.500 19a4 4 0 0 0 6 0" stroke="#4a4a90" fill="none"/><circle cx="5.500" cy="16.500" r="2" fill="#e01010"/><rect x="12.500" y="1.500" width="8" height="11" fill="#e4e4f0" stroke="#1a1a80" stroke-width="1.200"/><path d="M13.500 13a4 4 0 0 0 6 0" stroke="#4a4a90" fill="none"/><circle cx="16.500" cy="11" r="2" fill="#e01010"/><path d="M22 25h3v-3z" fill="#000"/></svg>
<div style="left:585px;top:38px;width:1px;height:16px;background:#7a7a7a;"></div>
<div style="left:586px;top:38px;width:1px;height:16px;background:#f2f2f2;"></div>
<svg style="left:594px;top:35px;" width="21" height="22"><path d="M8 4L9.500 11.500M9.500 11.500L3.500 14.500M9.500 11.500L16.500 8M9.500 11.500L11 19" stroke="#4a4a4a" stroke-width="1.300"/><circle cx="8" cy="3.500" r="2.600" fill="#e8d820" stroke="#a09010" stroke-width="0.500"/><circle cx="3" cy="14.500" r="2.400" fill="#d8d8d8" stroke="#888" stroke-width="0.500"/><circle cx="17" cy="7.500" r="2.400" fill="#d8d8d8" stroke="#888" stroke-width="0.500"/><circle cx="11" cy="19" r="2.400" fill="#d8d8d8" stroke="#888" stroke-width="0.500"/></svg>
<div style="left:623px;top:38px;width:1px;height:16px;background:#7a7a7a;"></div>
<div style="left:624px;top:38px;width:1px;height:16px;background:#f2f2f2;"></div>
<div style="left:626px;top:30px;width:31px;height:31px;background:#efc84a;box-shadow:inset 1px 1px 0 #6a6a6a,inset -1px -1px 0 #f4f4f4,inset 2px 2px 0 #c5c5c5,inset -2px -2px 0 #c5c5c5;"></div>
<svg style="left:628px;top:32px;" width="28" height="28"><g transform="translate(9 15) rotate(-45) scale(1.0)"><path d="M-5 8.500V0a5 5 0 0 1 10 0V8.500H2.200V0.300a2.200 2.200 0 0 0 -4.400 0V8.500z" fill="#e8604a" stroke="#9a3424" stroke-width="0.500"/><path d="M-3.900 8V0a3.900 3.900 0 0 1 2.200-3.500" stroke="#f9b0a0" stroke-width="1.100" fill="none"/><rect x="-5" y="8.500" width="2.800" height="2.200" fill="#fff" stroke="#666" stroke-width="0.400"/><rect x="2.200" y="8.500" width="2.800" height="2.200" fill="#fff" stroke="#666" stroke-width="0.400"/></g><path d="M22 26.500h4.500V22z" fill="#000"/></svg>
<span class="t" style="left:645.40px;top:35px;font-size:11px;line-height:11px;color:#000;font-weight:bold;">3</span>
<svg style="left:661px;top:32px;" width="26" height="28"><path d="M1 21.500h23M1 21.500L14 1" stroke="#000" stroke-width="1.100" fill="none"/><path d="M15.500 5.500a15 15 0 0 1 5 13" stroke="#000" stroke-width="1" fill="none"/><path d="M14 5l4 0.500-2.500 2.800zM21.500 19.500l-3-2 3.500-1.500z" fill="#000"/><g transform="translate(6.9 14.9) rotate(-45) scale(1.0)"><path d="M-5 8.500V0a5 5 0 0 1 10 0V8.500H2.200V0.300a2.200 2.200 0 0 0 -4.400 0V8.500z" fill="#e8604a" stroke="#9a3424" stroke-width="0.500"/><path d="M-3.900 8V0a3.900 3.900 0 0 1 2.200-3.500" stroke="#f9b0a0" stroke-width="1.100" fill="none"/><rect x="-5" y="8.500" width="2.800" height="2.200" fill="#fff" stroke="#666" stroke-width="0.400"/><rect x="2.200" y="8.500" width="2.800" height="2.200" fill="#fff" stroke="#666" stroke-width="0.400"/></g></svg>
<svg style="left:693px;top:32px;" width="27" height="28"><g transform="translate(7 14.8) rotate(-45) scale(1.0)"><path d="M-5 8.500V0a5 5 0 0 1 10 0V8.500H2.200V0.300a2.200 2.200 0 0 0 -4.400 0V8.500z" fill="#e8604a" stroke="#9a3424" stroke-width="0.500"/><path d="M-3.900 8V0a3.900 3.900 0 0 1 2.200-3.500" stroke="#f9b0a0" stroke-width="1.100" fill="none"/><rect x="-5" y="8.500" width="2.800" height="2.200" fill="#fff" stroke="#666" stroke-width="0.400"/><rect x="2.200" y="8.500" width="2.800" height="2.200" fill="#fff" stroke="#666" stroke-width="0.400"/></g></svg>
<span class="t" style="left:705.00px;top:32px;font-size:14px;line-height:14px;color:#000;font-weight:bold;">%</span>
<svg style="left:725px;top:32px;" width="27" height="28"><g transform="translate(6.8 14.9) rotate(-45) scale(1.0)"><path d="M-5 8.500V0a5 5 0 0 1 10 0V8.500H2.200V0.300a2.200 2.200 0 0 0 -4.400 0V8.500z" fill="#e8604a" stroke="#9a3424" stroke-width="0.500"/><path d="M-3.900 8V0a3.900 3.900 0 0 1 2.200-3.500" stroke="#f9b0a0" stroke-width="1.100" fill="none"/><rect x="-5" y="8.500" width="2.800" height="2.200" fill="#fff" stroke="#666" stroke-width="0.400"/><rect x="2.200" y="8.500" width="2.800" height="2.200" fill="#fff" stroke="#666" stroke-width="0.400"/></g><rect x="15.500" y="1.500" width="8.500" height="8" fill="#b0b0b0" stroke="#505050"/><rect x="15.500" y="9.500" width="8.500" height="8" fill="#b0b0b0" stroke="#505050"/><path d="M17.500 7.500l2.300-3.500 2.300 3.500zM17.500 12l2.300 3.500 2.300-3.500z" fill="#000"/></svg>
<div style="left:757px;top:38px;width:1px;height:16px;background:#7a7a7a;"></div>
<div style="left:758px;top:38px;width:1px;height:16px;background:#f2f2f2;"></div>
<svg style="left:763px;top:33px;" width="27" height="26"><text x="0" y="13" font-size="15" font-family="Liberation Sans, sans-serif" fill="#5a5a5a" letter-spacing="1.500">{}</text><text x="0.500" y="23" font-size="6.500" font-weight="bold" font-family="Liberation Sans, sans-serif" fill="#3a3a3a">ABC</text><path transform="translate(14.5 5) scale(1.0)" d="M0 0V15L3.500 11.500L6 17.500L8.500 16.500L6 10.700H11z" fill="#f8f8f8" stroke="#555" stroke-width="1"/></svg>
<div style="left:792px;top:30px;width:119px;height:21px;background:#e3e3e3;box-shadow:inset 1px 1px 0 #7c7c7c,inset 2px 2px 0 #3c3c3c,inset -1px -1px 0 #f4f4f4;"></div>
<div style="left:893px;top:32px;width:16px;height:17px;background:#dedede;box-shadow:inset 1px 1px 0 #fff,inset -1px -1px 0 #6a6a60,inset -2px -2px 0 #a8a8a0;"></div>
<svg style="left:897px;top:38px;" width="8" height="5"><path d="M0 0h8l-4 4.5z" fill="#000"/></svg>
<div style="left:915px;top:38px;width:1px;height:16px;background:#7a7a7a;"></div>
<div style="left:916px;top:38px;width:1px;height:16px;background:#f2f2f2;"></div>
<svg style="left:923px;top:33px;" width="23" height="24"><defs><linearGradient id="mi1" x1="0" y1="0" x2="1" y2="0"><stop offset="0" stop-color="#16363c"/><stop offset="1" stop-color="#4e8890"/></linearGradient><linearGradient id="mi2" x1="0" y1="0" x2="1" y2="0"><stop offset="0" stop-color="#b8c4d4"/><stop offset="1" stop-color="#7e8ea6"/></linearGradient></defs><path d="M1 3L9 9.500L1 20z" fill="url(#mi1)" stroke="#0e2226" stroke-width="0.600"/><path d="M21 3L13 9.500L21 20z" fill="url(#mi2)" stroke="#5e6e86" stroke-width="0.600"/><path d="M11 0.500V23.500" stroke="#e05050" stroke-width="1.300"/></svg>
<svg style="left:953px;top:33px;" width="28" height="27"><path d="M2 15.500L10 8l7 7-8 7.500z" fill="#3e6e76" stroke="#1e3e44" stroke-width="0.800"/><path d="M12 7L19 1.500l6 6.500-7 6z" fill="#c4cce0" stroke="#6e7ea0" stroke-width="0.800"/><path d="M8.500 23.500L25.500 9" stroke="#e03a3a" stroke-width="1.300"/><path d="M24 26h3v-3z" fill="#000"/></svg>
<div style="left:985px;top:38px;width:1px;height:16px;background:#7a7a7a;"></div>
<div style="left:986px;top:38px;width:1px;height:16px;background:#f2f2f2;"></div>
<svg style="left:992px;top:34px;" width="24" height="22"><path d="M1.500 12.5h12l9 7.500h-12z" fill="#fff" stroke="#000" stroke-width="1.100" stroke-linejoin="round"/><path d="M1.500 7h12l9 7.500h-12z" fill="#fff" stroke="#000" stroke-width="1.100" stroke-linejoin="round"/><path d="M1.500 1.5h12l9 7.500h-12z" fill="#fff" stroke="#000" stroke-width="1.100" stroke-linejoin="round"/></svg>
<div style="left:1023px;top:38px;width:1px;height:16px;background:#7a7a7a;"></div>
<div style="left:1024px;top:38px;width:1px;height:16px;background:#f2f2f2;"></div>
<svg style="left:1029px;top:36px;" width="24" height="20"><rect x="1" y="1" width="22" height="18" fill="#fff" stroke="#4a4a4a" stroke-width="1"/><rect x="1" y="0.500" width="22" height="2.500" fill="#3a3ad0"/><path d="M7.500 3v16M1 7.500h22M1 11.500h22M1 15.500h22" stroke="#8a8a8a" stroke-width="0.800"/><path d="M2.500 5.500h3M2.500 8.500h3M2.500 11h3M2.500 13.500h3M2.500 16.500h3" stroke="#2a2ac0" stroke-width="1.200"/><path d="M8 12l4-5 3.500 4.500H23" stroke="#d83030" stroke-width="1" fill="none"/><path d="M16.500 3v16" stroke="#20b020" stroke-width="1.300"/></svg>
<svg style="left:1062px;top:33px;" width="24" height="24"><rect x="1" y="1" width="21.500" height="21.500" fill="#c5c5c5" stroke="#2a2a2a" stroke-width="1.300"/><rect x="4.500" y="3.500" width="14.500" height="4.500" fill="#f0d820" stroke="#000" stroke-width="1"/><rect x="4.500" y="14.500" width="14.500" height="5" fill="#b4b4b4" stroke="#000" stroke-width="1.300"/><path d="M11.700 8.500v3M9 10.500h5.500l-2.700 3z" stroke="#d01010" fill="#d01010" stroke-width="1"/></svg>
<div style="left:1093px;top:38px;width:1px;height:16px;background:#7a7a7a;"></div>
<div style="left:1094px;top:38px;width:1px;height:16px;background:#f2f2f2;"></div>
<svg style="left:1100px;top:33px;" width="26" height="24"><defs><radialGradient id="bl1" cx="0.350" cy="0.300" r="0.750"><stop offset="0" stop-color="#c8d0f0"/><stop offset="0.450" stop-color="#4a5688"/><stop offset="1" stop-color="#181c38"/></radialGradient></defs><circle cx="6" cy="6" r="5.200" fill="url(#bl1)"/><defs><radialGradient id="bl2" cx="0.350" cy="0.300" r="0.750"><stop offset="0" stop-color="#ffffff"/><stop offset="0.450" stop-color="#c8c8c8"/><stop offset="1" stop-color="#505050"/></radialGradient></defs><circle cx="18.5" cy="6" r="5.200" fill="url(#bl2)"/><defs><radialGradient id="bl3" cx="0.350" cy="0.300" r="0.750"><stop offset="0" stop-color="#a0e8d8"/><stop offset="0.450" stop-color="#1e7a6a"/><stop offset="1" stop-color="#0a2a26"/></radialGradient></defs><circle cx="6" cy="17.5" r="5.200" fill="url(#bl3)"/><defs><radialGradient id="bl4" cx="0.350" cy="0.300" r="0.750"><stop offset="0" stop-color="#f0a0a0"/><stop offset="0.450" stop-color="#983030"/><stop offset="1" stop-color="#300c0c"/></radialGradient></defs><circle cx="18.5" cy="17.5" r="5.200" fill="url(#bl4)"/></svg>
<div style="left:1131px;top:38px;width:1px;height:16px;background:#7a7a7a;"></div>
<div style="left:1132px;top:38px;width:1px;height:16px;background:#f2f2f2;"></div>
<svg style="left:1137px;top:32px;" width="28" height="27"><rect x="3" y="1.500" width="15" height="9" fill="#fff" stroke="#4a4a4a"/><rect x="3" y="1" width="15" height="2.800" fill="#3a3ad8"/><g transform="translate(3.5 12.5)"><path d="M3 5.500C0 3 -1 1 1 0.500" stroke="#2a5a60" stroke-width="1.600" fill="none"/><path d="M18 3c3-1.500 4.500 1 1 5" stroke="#2a5a60" stroke-width="1.400" fill="none"/><ellipse cx="11" cy="6.500" rx="8" ry="5.500" fill="url(#tp)"/><path d="M5.500 2.500h11" stroke="#1e4e54" stroke-width="0.800"/><ellipse cx="11" cy="0.800" rx="1.300" ry="1" fill="#3a7a80"/><path d="M5 11.500h12" stroke="#16383c" stroke-width="1.200"/></g></svg>
<div style="left:1166px;top:30px;width:79px;height:21px;background:#e3e3e3;box-shadow:inset 1px 1px 0 #7c7c7c,inset 2px 2px 0 #3c3c3c,inset -1px -1px 0 #f4f4f4;"></div>
<div style="left:1227px;top:32px;width:16px;height:17px;background:#dedede;box-shadow:inset 1px 1px 0 #fff,inset -1px -1px 0 #6a6a60,inset -2px -2px 0 #a8a8a0;"></div>
<svg style="left:1231px;top:38px;" width="8" height="5"><path d="M0 0h8l-4 4.5z" fill="#000"/></svg>
<span class="t" style="left:1170.00px;top:36px;font-size:11px;line-height:11px;color:#000;">View</span>
<svg style="left:1249px;top:42px;" width="28" height="18"><g transform="translate(2.5 2)"><path d="M3 5.500C0 3 -1 1 1 0.500" stroke="#2a5a60" stroke-width="1.600" fill="none"/><path d="M18 3c3-1.500 4.500 1 1 5" stroke="#2a5a60" stroke-width="1.400" fill="none"/><ellipse cx="11" cy="6.500" rx="8" ry="5.500" fill="url(#tp)"/><path d="M5.500 2.500h11" stroke="#1e4e54" stroke-width="0.800"/><ellipse cx="11" cy="0.800" rx="1.300" ry="1" fill="#3a7a80"/><path d="M5 11.500h12" stroke="#16383c" stroke-width="1.200"/></g><path d="M24 16h3v-3z" fill="#000"/></svg>
<div style="left:0px;top:65px;width:1px;height:824px;background:#f2f2f2;"></div>
<div style="left:38px;top:65px;width:1px;height:824px;background:#828282;"></div>
<div style="left:39px;top:65px;width:1px;height:824px;background:#f0f0f0;"></div>
<div style="left:1px;top:64px;width:38px;height:1px;background:#7a7a7a;"></div>
<div style="left:1px;top:65px;width:37px;height:1px;background:#f2f2f2;"></div>
<div style="left:4px;top:69px;width:31px;height:1px;background:#7a7a7a;"></div>
<div style="left:4px;top:70px;width:31px;height:1px;background:#f2f2f2;"></div>
<svg style="left:4px;top:74px;" width="30" height="30"><g stroke="#0a0a0a" stroke-width="1" stroke-linejoin="round"><path d="M9 6.500l3-2.500h9l-3 2.500z" fill="#e4fcfc"/><path d="M18 6.500l3-2.500v8l-3 2.500z" fill="#1e4a50"/><rect x="9" y="6.500" width="9" height="8.500" fill="url(#tl)"/><path d="M3.500 15l3-2.500h9l-3 2.500z" fill="#e4fcfc"/><path d="M12.500 15l3-2.500v8.500l-3 2.500z" fill="#1e4a50"/><rect x="3.500" y="15" width="9" height="8.500" fill="url(#tl)"/><path d="M14.500 16.500l3-2.500h9l-3 2.500z" fill="#e4fcfc"/><path d="M23.500 16.500l3-2.500v8.500l-3 2.500z" fill="#1e4a50"/><rect x="14.500" y="16.500" width="9" height="8.500" fill="url(#tl)"/></g></svg>
<svg style="left:4px;top:105px;" width="30" height="30"><path d="M10 6c2 2 8 2 10 0l7 3.500-2.500 5-3.500-1.500v11.500H9V13l-3.500 1.500L3 9.500z" fill="url(#tl)" stroke="#4a9aa0" stroke-width="0.900"/><text x="11" y="20" font-size="9" font-weight="bold" font-family="Liberation Sans, sans-serif" fill="#6a8aa0">C</text></svg>
<svg style="left:4px;top:135px;" width="30" height="30"><circle cx="15" cy="15" r="11.500" fill="url(#bg1)"/><path d="M19 4C15 8 10 16 7.600 23.800A11.500 11.500 0 0 0 13 26.300C13 19 16 10 19 4z" fill="#a6e6ee"/><path d="M19 4C13 5 8 7 5 9.300A11.500 11.500 0 0 0 3.500 16C7 10 13 6 19 4z" fill="#a6e6ee"/><path d="M19 4C23 7 25.500 11 26.300 17A11.500 11.500 0 0 0 25.800 11C24 8 22 5.500 19 4z" fill="#a6e6ee"/><path d="M19 4C15 8 10 16 7.600 23.800M19 4C16 10 13 19 13 26.300M19 4C13 5 8 7 5 9.300M19 4C13 6 7 10 3.500 16M19 4C22 5.500 24 8 25.800 11M19 4C23 7 25.500 11 26.300 17M19 4c1 8 0 16-2 22" stroke="#3e8088" stroke-width="0.600" fill="none"/><circle cx="15" cy="15" r="11.500" fill="none" stroke="#6a8a8e" stroke-width="0.700"/></svg>
<svg style="left:4px;top:166px;" width="30" height="30"><ellipse cx="15" cy="19.500" rx="11.500" ry="4.800" fill="#b4eef2" stroke="#4e9aa2" stroke-width="0.800"/><ellipse cx="15" cy="19" rx="7.500" ry="2.800" fill="#5aaab2" stroke="#2e6e76" stroke-width="0.700"/><ellipse cx="15" cy="18.700" rx="4.500" ry="1.500" fill="#c8f6f8"/><path d="M14.300 5.500h1.200l1 13.500h-3z" fill="#2e6e76"/><path d="M5 22.500c3 2.500 16 2.500 20 0" stroke="#3e8a92" fill="none" stroke-width="1.200"/></svg>
<svg style="left:4px;top:196px;" width="30" height="30"><path d="M13.500 4.500c2-1.500 4.500-.5 4.500 2.500l-.3 3.500 6.800 1c2 .8 1.500 3.500-.5 3.700l-6 .8 1.800 7.500c.3 2.500-3 3.500-4.200 1.500l-2.300-5.500-3 6c-1.500 2-4.500 .5-3.800-2l3.300-8.500-4.800-3c-1.500-1.500 0-4 2-3.200l5 2z" fill="url(#tl)" stroke="#3e8a92" stroke-width="1" stroke-linejoin="round"/><path d="M12 8c-1 3-1 6 0 9l-2 6" stroke="#2e6e76" stroke-width="1.400" fill="none"/></svg>
<div style="left:4px;top:230px;width:31px;height:1px;background:#7a7a7a;"></div>
<div style="left:4px;top:231px;width:31px;height:1px;background:#f2f2f2;"></div>
<svg style="left:4px;top:233px;" width="30" height="30"><path d="M5.600 9h19.200L27 23H4z" fill="#050505"/><path d="M15.800 10h7.500l.9 5h-8.400zM5 16.500h9.500V22H4.300z" fill="#a8e4e8"/><path d="M4 23.500h23" stroke="#3e8a92" stroke-width="0.800"/></svg>
<svg style="left:4px;top:265px;" width="30" height="30"><g fill="none" stroke="#3e8a92" stroke-width="2.8"><ellipse cx="15.500" cy="8.5" rx="8.700" ry="3.400"/><ellipse cx="15.500" cy="13" rx="8.700" ry="3.400"/><ellipse cx="15.500" cy="17.5" rx="8.700" ry="3.400"/><path d="M6.800 22a8.700 3.400 0 0 0 17.400 0"/></g><g fill="none" stroke="#b4ecf0" stroke-width="1.4"><ellipse cx="15.500" cy="8.5" rx="8.700" ry="3.400"/><ellipse cx="15.500" cy="13" rx="8.700" ry="3.400"/><ellipse cx="15.500" cy="17.5" rx="8.700" ry="3.400"/><path d="M6.800 22a8.700 3.400 0 0 0 17.400 0"/></g></svg>
<svg style="left:4px;top:296px;" width="30" height="30"><g transform="rotate(45 15 15)"><rect x="1" y="13.200" width="8.500" height="3.600" fill="#a8e4e8" stroke="#111" stroke-width="0.800"/><rect x="9.500" y="11.500" width="15" height="7" fill="url(#tl)" stroke="#111" stroke-width="0.800"/><rect x="24.500" y="13" width="2.500" height="4" fill="#111"/></g></svg>
<svg style="left:4px;top:327px;" width="30" height="30"><path d="M14.300 4h2.600l.3 11.500h-3.200zM16 14.700l8.700.2v2.600l-8.700.2z" fill="#a8e4e8" stroke="#2e6e76" stroke-width="0.800"/><path d="M16.500 4c5 .5 8.500 5 8.700 10.500" stroke="#222" stroke-width="1.200" fill="none"/><g transform="rotate(-45 16 16)"><rect x="1.500" y="12.800" width="14" height="6.400" fill="url(#tl)" stroke="#111" stroke-width="0.800"/><rect x="0" y="14" width="1.500" height="4" fill="#111"/></g></svg>
<svg style="left:4px;top:358px;" width="30" height="30"><path d="M26.4 16.2L26.0 18.5L23.5 19.8L22.4 21.4L22.3 24.3L20.4 25.7L17.8 24.7L15.9 25.0L13.9 27.0L11.6 26.5L10.5 23.9L8.9 22.8L6.1 22.6L4.8 20.7L5.8 17.9L5.4 16.0L3.6 13.8L4.0 11.5L6.5 10.2L7.6 8.6L7.7 5.7L9.6 4.3L12.2 5.3L14.1 5.0L16.1 3.0L18.4 3.5L19.5 6.1L21.1 7.2L23.9 7.4L25.2 9.3L24.2 12.1L24.6 14.0z" fill="url(#tl)" stroke="#1e4a50" stroke-width="0.900"/><ellipse cx="15.500" cy="15" rx="4.500" ry="5.500" fill="#c5c5c5" stroke="#1e4a50" stroke-width="1"/></svg>
<svg style="left:4px;top:390px;" width="30" height="30"><path d="M15 19v6.500" stroke="#4e9aa0" stroke-width="1.800"/><path d="M3.500 19.500h23" stroke="#333" stroke-width="1.100"/><path d="M3 19.500l3-1.800v3.600zM27 19.500l-3.500-2.200v4.400z" fill="#fff" stroke="#333" stroke-width="0.600"/><path d="M10.500 15c0-3 2-3.500 3-4.500s.5-2.500 2-3.300 3-.2 3 1.500-1 1.800-.3 3.500-1 4.500-3.700 4.500z" fill="#eafcfc" stroke="#7ac0c6" stroke-width="0.800"/></svg>
<svg style="left:4px;top:420px;" width="30" height="30"><path d="M3 19c0-3 4-4 8-5l5-4c3-1 8-1 10 1l1 3c-2 3-8 7-14 8-4 1-9 0-10-3z" fill="url(#tl)" stroke="#4a8a90" stroke-width="0.700"/><path d="M13 12l5-2.500c3-.5 6 0 7 .5" stroke="#e8a070" stroke-width="1.500" fill="none"/><path d="M4 21c2 2 8 1.500 12 0" stroke="#c07070" stroke-width="1.200" fill="none"/><ellipse cx="17" cy="21" rx="2.500" ry="1.600" fill="#333"/></svg>
<svg style="left:4px;top:451px;" width="30" height="30"><path d="M6 10l7-5 5 3-2 9 3 2-8 8-6-4z" fill="url(#tl)" stroke="#2e6e76" stroke-width="0.800"/><path d="M19 7l5 2 1 12-5 5-3-3 3-5-3-3z" fill="url(#tl)" stroke="#2e6e76" stroke-width="0.800"/><path d="M13 5l5 3 6 1-4-3.500z" fill="#eafcfc" stroke="#6ab4ba" stroke-width="0.500"/></svg>
<svg style="left:4px;top:481px;" width="30" height="30"><path d="M5 10.500c2.500-3 4.500 2 7 0s4.500 2 7 0 4 1.500 6 0M5 15.500c2.500-3 4.500 2 7 0s4.500 2 7 0 4 1.500 6 0M5 20.500c2.500-3 4.500 2 7 0s4.500 2 7 0 4 1.500 6 0" stroke="#2a7a82" stroke-width="1.300" fill="none"/></svg>
<div style="left:4px;top:513px;width:31px;height:1px;background:#7a7a7a;"></div>
<div style="left:4px;top:514px;width:31px;height:1px;background:#f2f2f2;"></div>
<svg style="left:4px;top:519px;" width="30" height="30"><g fill="none" stroke="#3e8a92" stroke-width="3.6"><ellipse cx="11.500" cy="17" rx="6.500" ry="5" transform="rotate(-25 11.500 17)"/><ellipse cx="19" cy="11.500" rx="4.800" ry="6.500" transform="rotate(20 19 11.500)"/><ellipse cx="18" cy="19.500" rx="5.500" ry="4.500" transform="rotate(35 18 19.500)"/></g><g fill="none" stroke="#c8f4f6" stroke-width="1.8"><ellipse cx="11.500" cy="17" rx="6.500" ry="5" transform="rotate(-25 11.500 17)"/><ellipse cx="19" cy="11.500" rx="4.800" ry="6.500" transform="rotate(20 19 11.500)"/><ellipse cx="18" cy="19.500" rx="5.500" ry="4.500" transform="rotate(35 18 19.500)"/></g></svg>
<svg style="left:4px;top:550px;" width="30" height="30"><circle cx="15.500" cy="4" r="2" fill="#a8e4e8" stroke="#3e8a92" stroke-width="0.700"/><path d="M5 8l8-.8h5l8 .8v1.600l-7.500 .8 0 6 1.200 10.500h-2.800l-1.400-8.500-1.400 8.500h-2.800l1.200-10.500 0-6-7.500-.8z" fill="url(#tl)" stroke="#3e8a92" stroke-width="0.800"/></svg>
<svg style="left:4px;top:582px;" width="30" height="30"><path d="M5 9l12-3 1 16-11 4z" fill="url(#tl)" stroke="#2e6e76" stroke-width="0.900"/><path d="M17 6l7-2 1 17-7 1z" fill="#5aaab0" stroke="#1e4a50" stroke-width="0.900"/><circle cx="9" cy="13" r="1" fill="#fff"/><circle cx="14" cy="11" r="1" fill="#fff"/><circle cx="10" cy="20" r="1" fill="#fff"/><circle cx="15" cy="18" r="1" fill="#fff"/><circle cx="21" cy="9" r="0.800" fill="#dff"/><circle cx="21" cy="16" r="0.800" fill="#dff"/></svg>
<svg style="left:4px;top:612px;" width="30" height="30"><path d="M17 7l7-1 2 8-7 2z" fill="#3e8a92" stroke="#1e4a50" stroke-width="0.800"/><path d="M17 7l7-1 .8 3-7 1z" fill="#eafcfc"/><path d="M3 16l6-3 4 7-6 4z" fill="#3e8a92" stroke="#1e4a50" stroke-width="0.800"/><path d="M3 16l6-3 1.500 2.500-6 3z" fill="#c4f0f2"/><path d="M12 15l5-3" stroke="#222" stroke-width="1" stroke-dasharray="2 1.500"/></svg>
<svg style="left:4px;top:643px;" width="30" height="30"><path d="M9 6l1 19M15 3l1 20M19 5l1 15M9 19l12-3M10 24l8-4 8 3" stroke="#2e6e76" stroke-width="2.600" fill="none"/><path d="M9 6l1 19M15 3l1 20M19 5l1 15M9 19l12-3M10 24l8-4 8 3" stroke="#b4ecee" stroke-width="1.200" fill="none"/></svg>
<svg style="left:4px;top:674px;" width="30" height="30"><ellipse cx="15" cy="15" rx="11.500" ry="10" fill="#6ab4bc" stroke="#2e6e76" stroke-width="0.900" transform="rotate(-25 15 15)"/><ellipse cx="15.500" cy="14" rx="9" ry="7.500" fill="#4a8e96" transform="rotate(-25 15 15)"/><path d="M15.500 14l-7-4M15.500 14l1-8M15.500 14l8-1M15.500 14l4 6M15.500 14l-5 6" stroke="#d4f8f8" stroke-width="2"/><ellipse cx="15" cy="15" rx="11.500" ry="10" fill="none" stroke="#a8e4e8" stroke-width="2" transform="rotate(-25 15 15)"/></svg>
<svg style="left:4px;top:704px;" width="30" height="30"><path d="M4 13c4-2 6 1 9 3s6 3 9 1 4-4 5-4" stroke="#2e6e76" stroke-width="3" fill="none"/><path d="M4 13c4-2 6 1 9 3s6 3 9 1 4-4 5-4" stroke="#b4ecee" stroke-width="1.400" fill="none"/><circle cx="13.500" cy="16" r="2.800" fill="url(#tr)" stroke="#2e6e76" stroke-width="0.700"/></svg>
<div style="left:4px;top:735px;width:31px;height:1px;background:#7a7a7a;"></div>
<div style="left:4px;top:736px;width:31px;height:1px;background:#f2f2f2;"></div>
<svg style="left:4px;top:741px;" width="30" height="30"><path d="M10 6c2 2 8 2 10 0l7 3.500-2.500 5-3.500-1.500v11.500H9V13l-3.500 1.500L3 9.500z" fill="#b4ecee" stroke="#0a0a0a" stroke-width="1.300"/><text x="10" y="21" font-size="10" font-weight="bold" font-family="Liberation Sans, sans-serif" fill="#000">M</text></svg>
<svg style="left:4px;top:773px;" width="30" height="30"><circle cx="15" cy="15" r="11.500" fill="url(#bg1)"/><path d="M19 4C15 8 10 16 7.600 23.800A11.500 11.500 0 0 0 13 26.300C13 19 16 10 19 4z" fill="#a6e6ee"/><path d="M19 4C13 5 8 7 5 9.300A11.500 11.500 0 0 0 3.500 16C7 10 13 6 19 4z" fill="#a6e6ee"/><path d="M19 4C23 7 25.500 11 26.300 17A11.500 11.500 0 0 0 25.800 11C24 8 22 5.500 19 4z" fill="#a6e6ee"/><path d="M19 4C15 8 10 16 7.600 23.800M19 4C16 10 13 19 13 26.300M19 4C13 5 8 7 5 9.300M19 4C13 6 7 10 3.500 16M19 4C22 5.500 24 8 25.800 11M19 4C23 7 25.500 11 26.300 17M19 4c1 8 0 16-2 22" stroke="#3e8088" stroke-width="0.600" fill="none"/><circle cx="15" cy="15" r="11.500" fill="none" stroke="#6a8a8e" stroke-width="0.700"/><path d="M17 5l8 9-1 7-5-2z" fill="#111"/><path d="M19 9l2 8 1-5z" fill="#fff"/><text x="17" y="27" font-size="10" font-weight="bold" font-family="Liberation Sans, sans-serif" fill="#000" stroke="#000" stroke-width="0.400">M</text></svg>
<svg style="left:4px;top:805px;" width="30" height="30"><g fill="none" stroke="#8e8e8e" stroke-width="1.300"><ellipse cx="15" cy="15" rx="11" ry="10"/><ellipse cx="15" cy="15.500" rx="8" ry="7"/><ellipse cx="15" cy="16" rx="5" ry="4.500"/></g><path d="M4 10l7 4" stroke="#8e8e8e" stroke-width="1.500"/><text x="17" y="27" font-size="10" font-weight="bold" font-family="Liberation Sans, sans-serif" fill="#8e8e8e" stroke="#8e8e8e" stroke-width="0.400">M</text><path d="M5 9l6 3" stroke="#f4f4f4"/></svg>
<div style="left:4px;top:836px;width:31px;height:1px;background:#7a7a7a;"></div>
<div style="left:4px;top:837px;width:31px;height:1px;background:#f2f2f2;"></div>
<svg style="left:4px;top:840px;" width="30" height="30"><rect x="7" y="4.500" width="17" height="20" fill="#dcdcdc" stroke="#111" stroke-width="1.300"/><rect x="7" y="4.500" width="17" height="3.500" fill="url(#tl)" stroke="#111" stroke-width="1"/><path d="M9.500 12h3.500M9.500 16h3.500M9.500 20h3.500" stroke="#9a9a9a" stroke-width="2"/><path d="M15 12h7M16 15h6M16 18h6M15 21h7" stroke="#222" stroke-width="1.200"/><path d="M8 25.500h17.500V6" stroke="#555" stroke-width="1.200" fill="none"/></svg>
<div style="left:4px;top:872px;width:31px;height:1px;background:#7a7a7a;"></div>
<div style="left:4px;top:873px;width:31px;height:1px;background:#f2f2f2;"></div>
<div style="left:4px;top:876px;width:32px;height:12px;overflow:hidden">
<svg style="left:8px;top:4px" width="20" height="20"><circle cx="10" cy="10" r="8.500" fill="url(#tr)" stroke="#2e6e76"/><circle cx="10" cy="10" r="5" fill="#eafcfc"/></svg>
</div>
<div style="left:36px;top:110px;width:161px;height:240px;background:#c6c6c6;box-shadow:inset 0 0 0 1px #ececf6,inset 0 0 0 2px #fafafe;"></div>
<div style="left:36px;top:110px;width:161px;height:20px;background:linear-gradient(#ffffff 0%,#fbfbfe 55%,#e6e6f0 100%);"></div>
<div style="left:36px;top:349px;width:161px;height:1px;background:#f0f0f8;"></div>
<div style="left:196px;top:110px;width:1px;height:240px;background:#ececf4;"></div>
<span class="t" style="left:37.50px;top:116px;font-size:11px;line-height:11px;color:#989898;font-weight:bold;letter-spacing:-0.400px;">NURBS</span>
<div style="left:180px;top:115px;width:12px;height:11px;background:linear-gradient(#f4aca8,#e48c8c);border-radius:2px;box-shadow:inset 0 0 0 1px #f6c8c4,0 0 0 1px #dc8888;"></div>
<svg style="left:182px;top:117px;" width="8" height="8"><path d="M1 0.500L7 6.500M7 0.500L1 6.500" stroke="#fff" stroke-width="1.600"/></svg>
<span class="t" style="left:43.60px;top:135px;font-size:11px;line-height:11px;color:#000;letter-spacing:-0.400px;">Points</span>
<span class="t" style="left:43.60px;top:171px;font-size:11px;line-height:11px;color:#000;letter-spacing:-0.400px;">Curves</span>
<span class="t" style="left:43.60px;top:259px;font-size:11px;line-height:11px;color:#000;letter-spacing:-0.358px;">Surfaces</span>
<svg style="left:45px;top:148px;" width="20" height="20"><g transform="translate(10 10) scale(0.930) translate(-10 -10)"><path d="M10 6.2L14.3 14.3H5.7z" fill="#fff" stroke="#000" stroke-width="1.300"/><path d="M10 9.5L11.5 12.5H8.5z" fill="#000"/></g></svg>
<svg style="left:69px;top:148px;" width="20" height="20"><g transform="translate(10 10) scale(0.930) translate(-10 -10)"><path d="M7 3.3L10.7 10.2H3.3z" fill="#fff" stroke="#9a9a9a" stroke-width="1.300"/><path d="M7 6L8.5 9H5.5z" fill="#9a9a9a"/><path d="M7.8 10.5L10.5 7.8H13.5L16.2 10.5V13.5L13.5 16.2H10.5L7.8 13.5z" fill="#000"/><path d="M9 12h6M12 9v6" stroke="#10e810" stroke-width="1.500"/><path d="M9.8 9.8l4.400 4.400M14.2 9.8l-4.400 4.400" stroke="#10d010" stroke-width="1" stroke-dasharray="1.200 3.800"/><rect x="11.2" y="11.2" width="1.600" height="1.600" fill="#e8ffe8"/></g></svg>
<svg style="left:93px;top:148px;" width="20" height="20"><g transform="translate(10 10) scale(0.930) translate(-10 -10)"><path d="M2 4c6 1 13 6 15 14" stroke="#7e7e7e" fill="none" stroke-width="1.100"/><path d="M6.3 7.5L9.0 4.8H12.0L14.7 7.5V10.5L12.0 13.2H9.0L6.3 10.5z" fill="#000"/><path d="M7.5 9h6M10.5 6v6" stroke="#10e810" stroke-width="1.500"/><path d="M8.3 6.8l4.400 4.400M12.7 6.8l-4.400 4.400" stroke="#10d010" stroke-width="1" stroke-dasharray="1.200 3.800"/><rect x="9.7" y="8.2" width="1.600" height="1.600" fill="#e8ffe8"/></g></svg>
<svg style="left:117px;top:148px;" width="20" height="20"><g transform="translate(10 10) scale(0.930) translate(-10 -10)"><path d="M2 4c6 3 12 8 15 14M2 14c6-1 12-5 15-10" stroke="#7e7e7e" fill="none" stroke-width="1.100"/><path d="M6.3 8.0L9.0 5.3H12.0L14.7 8.0V11.0L12.0 13.7H9.0L6.3 11.0z" fill="#000"/><path d="M7.5 9.5h6M10.5 6.5v6" stroke="#10e810" stroke-width="1.500"/><path d="M8.3 7.3l4.400 4.400M12.7 7.3l-4.400 4.400" stroke="#10d010" stroke-width="1" stroke-dasharray="1.200 3.800"/><rect x="9.7" y="8.7" width="1.600" height="1.600" fill="#e8ffe8"/></g></svg>
<svg style="left:141px;top:148px;" width="20" height="20"><g transform="translate(10 10) scale(0.930) translate(-10 -10)"><rect x="2" y="2" width="13" height="12" fill="#969696"/><rect x="3.0" y="3.0" width="2.600" height="2.400" fill="#f4f4f4"/><rect x="3.0" y="6.9" width="2.600" height="2.400" fill="#f4f4f4"/><rect x="3.0" y="10.8" width="2.600" height="2.400" fill="#f4f4f4"/><rect x="7.2" y="3.0" width="2.600" height="2.400" fill="#f4f4f4"/><rect x="7.2" y="6.9" width="2.600" height="2.400" fill="#f4f4f4"/><rect x="7.2" y="10.8" width="2.600" height="2.400" fill="#f4f4f4"/><rect x="11.4" y="3.0" width="2.600" height="2.400" fill="#f4f4f4"/><rect x="11.4" y="6.9" width="2.600" height="2.400" fill="#f4f4f4"/><rect x="11.4" y="10.8" width="2.600" height="2.400" fill="#f4f4f4"/><path d="M9.3 11.5L12.0 8.8H15.0L17.7 11.5V14.5L15.0 17.2H12.0L9.3 14.5z" fill="#000"/><path d="M10.5 13h6M13.5 10v6" stroke="#10e810" stroke-width="1.500"/><path d="M11.3 10.8l4.400 4.400M15.7 10.8l-4.400 4.400" stroke="#10d010" stroke-width="1" stroke-dasharray="1.200 3.800"/><rect x="12.7" y="12.2" width="1.600" height="1.600" fill="#e8ffe8"/></g></svg>
<svg style="left:165px;top:148px;" width="20" height="20"><g transform="translate(10 10) scale(0.930) translate(-10 -10)"><rect x="3" y="5" width="13" height="12" fill="#6e6e6e" stroke="#000" stroke-width="1.600"/><path d="M12 5l2-3M4 18l-1 1.500" stroke="#000" stroke-width="1.500"/><path d="M5.3 9.5L8.0 6.8H11.0L13.7 9.5V12.5L11.0 15.2H8.0L5.3 12.5z" fill="#000"/><path d="M6.5 11h6M9.5 8v6" stroke="#10e810" stroke-width="1.500"/><path d="M7.3 8.8l4.400 4.400M11.7 8.8l-4.400 4.400" stroke="#10d010" stroke-width="1" stroke-dasharray="1.200 3.800"/><rect x="8.7" y="10.2" width="1.600" height="1.600" fill="#e8ffe8"/></g></svg>
<svg style="left:45px;top:186px;" width="20" height="20"><g transform="translate(10 10) scale(0.930) translate(-10 -10)"><path d="M2 7c5 0 9 4 9.500 10" stroke="#000" stroke-width="1.300" fill="none"/><rect x="10.500" y="3" width="7" height="7" fill="none" stroke="#10e010" stroke-width="1.800"/><rect x="12.500" y="5" width="3" height="3" fill="#9a9a9a"/></g></svg>
<svg style="left:69px;top:186px;" width="20" height="20"><g transform="translate(10 10) scale(0.930) translate(-10 -10)"><path d="M2 3c6 1 11 6 13.500 14" stroke="#000" stroke-width="1.300" fill="none"/><path d="M10 5.500l5 5-5 5-5-5z" fill="#8a8a8a" stroke="#10e010" stroke-width="1.800"/></g></svg>
<svg style="left:93px;top:186px;" width="20" height="20"><g transform="translate(10 10) scale(0.930) translate(-10 -10)"><path d="M2 3c6 1 11 6 13.500 14" stroke="#000" stroke-width="1.300" fill="none"/><path d="M10.5 6.8L14.2 13.7H6.8z" fill="#fff" stroke="#8a8a8a" stroke-width="1.300"/><path d="M10.5 9.5L12.0 12.5H9.0z" fill="#8a8a8a"/></g></svg>
<svg style="left:117px;top:186px;" width="20" height="20"><g transform="translate(10 10) scale(0.930) translate(-10 -10)"><path d="M4 5c3 3 4 7 2.500 9.500S2 15 2.500 12.500" stroke="#000" stroke-width="1.300" fill="none"/><path d="M13 3c3 3 4.500 8 3 11s-5 1-4.500-1.500" stroke="#10e010" stroke-width="1.600" fill="none"/></g></svg>
<svg style="left:141px;top:186px;" width="20" height="20"><g transform="translate(10 10) scale(0.930) translate(-10 -10)"><path d="M2 17L6 8M14.500 10L18 3" stroke="#000" stroke-width="1.400" fill="none"/><path d="M6 8c2-5 4-2 5 2s2 4 3.500 0" stroke="#10e010" stroke-width="1.700" fill="none"/></g></svg>
<svg style="left:165px;top:186px;" width="20" height="20"><g transform="translate(10 10) scale(0.930) translate(-10 -10)"><path d="M6 4c3 3 5 6 3.500 9S5 13.500 5.500 11.500" stroke="#000" stroke-width="1.200" fill="none"/><path d="M12 3c4 3 6 9 4 12s-8 2-10.500-1.500" stroke="#10e010" stroke-width="1.700" fill="none"/></g></svg>
<svg style="left:45px;top:210px;" width="20" height="20"><g transform="translate(10 10) scale(0.930) translate(-10 -10)"><path d="M4 5c3 3 4 7 2.500 9.500S2 15 2.500 12.500" stroke="#000" stroke-width="1.300" fill="none"/><path d="M15.500 5c-3 2-4.500 5-3.500 7.500s-2 3.500-2.500 1" stroke="#10e010" stroke-width="1.600" fill="none"/></g></svg>
<svg style="left:69px;top:210px;" width="20" height="20"><g transform="translate(10 10) scale(0.930) translate(-10 -10)"><path d="M2 4.500h6M17 12v6" stroke="#000" stroke-width="1.500"/><path d="M8 4.500L17 12" stroke="#10e010" stroke-width="1.700"/></g></svg>
<svg style="left:93px;top:210px;" width="20" height="20"><g transform="translate(10 10) scale(0.930) translate(-10 -10)"><path d="M2 4.500h7M17 12v6" stroke="#000" stroke-width="1.500"/><path d="M9 4.500c5 0 8 3 8 7.500" stroke="#10e010" stroke-width="1.700" fill="none"/></g></svg>
<svg style="left:117px;top:210px;" width="20" height="20"><g transform="translate(10 10) scale(0.930) translate(-10 -10)"><rect x="2.500" y="2.500" width="10" height="10" fill="none" stroke="#7e7e7e" stroke-width="1.200"/><rect x="8.500" y="6.500" width="9" height="11" fill="none" stroke="#7e7e7e" stroke-width="1.200"/><path d="M8.500 12.500l6-7" stroke="#10e010" stroke-width="1.600"/></g></svg>
<svg style="left:141px;top:210px;" width="20" height="20"><g transform="translate(10 10) scale(0.930) translate(-10 -10)"><rect x="2.500" y="2.500" width="13" height="12" fill="none" stroke="#7e7e7e" stroke-width="1.200"/><path d="M2.500 5.500h13" stroke="#10e010" stroke-width="1.700"/><path d="M12.500 12.500v4.500h4.500v-4.500" stroke="#000" stroke-width="1.800" fill="none"/></g></svg>
<svg style="left:165px;top:210px;" width="20" height="20"><g transform="translate(10 10) scale(0.930) translate(-10 -10)"><rect x="2.500" y="2.500" width="13" height="12" fill="none" stroke="#7e7e7e" stroke-width="1.200"/><path d="M6.500 2.500v12" stroke="#10e010" stroke-width="1.700"/><path d="M12.500 12l2.500 5 2.500-5" stroke="#000" stroke-width="1.800" fill="none"/></g></svg>
<svg style="left:45px;top:233px;" width="20" height="20"><g transform="translate(10 10) scale(0.930) translate(-10 -10)"><rect x="3.500" y="3.500" width="13" height="13" fill="none" stroke="#7e7e7e" stroke-width="1.200"/><path d="M5 5c4 3 5 6 6 11" stroke="#10e010" stroke-width="1.800" fill="none"/><path d="M13 5c-3 2-1 4-3 6s0 5 1.500 8" stroke="#000" stroke-width="1.300" fill="none"/><path d="M13 8V4l3 4V4" stroke="#000" stroke-width="0.900" fill="none"/></g></svg>
<svg style="left:69px;top:233px;" width="20" height="20"><g transform="translate(10 10) scale(0.930) translate(-10 -10)"><rect x="3.500" y="3.500" width="13" height="13" fill="none" stroke="#7e7e7e" stroke-width="1.200"/><path d="M5 5c4 3 5 6 6 11" stroke="#10e010" stroke-width="1.800" fill="none"/><path d="M13 5c-3 2-1 4-3 6s0 5 1.500 8" stroke="#000" stroke-width="1.300" fill="none"/><path d="M13 4l1.500 3L16 4" stroke="#000" stroke-width="0.900" fill="none"/></g></svg>
<svg style="left:93px;top:233px;" width="20" height="20"><g transform="translate(10 10) scale(0.930) translate(-10 -10)"><rect x="3.500" y="3.500" width="13" height="13" fill="none" stroke="#7e7e7e" stroke-width="1.200"/><rect x="3" y="3" width="5" height="5" fill="#c5c5c5" stroke="#10e010" stroke-width="1.300"/><path d="M9 6c5-2 8 2 5 5s-7 1-7.500 5" stroke="#10e010" stroke-width="1.700" fill="none"/></g></svg>
<svg style="left:117px;top:233px;" width="20" height="20"><g transform="translate(10 10) scale(0.930) translate(-10 -10)"><rect x="3.500" y="3.500" width="13" height="13" fill="none" stroke="#7e7e7e" stroke-width="1.200"/><path d="M5.500 2.500l3 3-3 3-3-3z" fill="#c5c5c5" stroke="#10e010" stroke-width="1.300"/><path d="M9 6c5-2 8 2 5 5s-7 1-7.500 5M8 13l-2.500 3 3.500 .5" stroke="#10e010" stroke-width="1.600" fill="none"/></g></svg>
<svg style="left:141px;top:233px;" width="20" height="20"><g transform="translate(10 10) scale(0.930) translate(-10 -10)"><rect x="3.500" y="3.500" width="13" height="13" fill="none" stroke="#7e7e7e" stroke-width="1.200"/><path d="M12 5c3 3 2 8-1 10s-6 0-6.500-1" stroke="#10e010" stroke-width="2" fill="none"/><path d="M9 5c2 2 2 5 .5 6.500S5.500 12 6 10" stroke="#000" stroke-width="1.500" fill="none"/></g></svg>
<svg style="left:165px;top:233px;" width="20" height="20"><g transform="translate(10 10) scale(0.930) translate(-10 -10)"><path d="M5.500 4h6c4 0 5.500 3 5.500 6s-2 6-6 6-6-3-6-6.500z" stroke="#7e7e7e" stroke-width="1.200" fill="none"/><path d="M5 10c0 3.500 2.500 6 6 6s6-3 6-6" stroke="#10e010" stroke-width="1.700" fill="none"/></g></svg>
<svg style="left:45px;top:272px;" width="20" height="20"><g transform="translate(10 10) scale(0.930) translate(-10 -10)"><rect x="2" y="2" width="13" height="12" fill="#f4f4f4" stroke="#000" stroke-width="1.200"/><rect x="3.5" y="3.5" width="2.400" height="2.200" fill="#8a8a8a"/><rect x="3.5" y="7.2" width="2.400" height="2.200" fill="#8a8a8a"/><rect x="3.5" y="10.9" width="2.400" height="2.200" fill="#8a8a8a"/><rect x="7.5" y="3.5" width="2.400" height="2.200" fill="#8a8a8a"/><rect x="7.5" y="7.2" width="2.400" height="2.200" fill="#8a8a8a"/><rect x="7.5" y="10.9" width="2.400" height="2.200" fill="#8a8a8a"/><rect x="11.5" y="3.5" width="2.400" height="2.200" fill="#8a8a8a"/><rect x="11.5" y="7.2" width="2.400" height="2.200" fill="#8a8a8a"/><rect x="11.5" y="10.9" width="2.400" height="2.200" fill="#8a8a8a"/><rect x="11.500" y="11" width="6" height="6" fill="#a8a8a8" stroke="#10e010" stroke-width="1.700"/></g></svg>
<svg style="left:69px;top:272px;" width="20" height="20"><g transform="translate(10 10) scale(0.930) translate(-10 -10)"><rect x="2" y="2" width="13" height="12" fill="#f4f4f4" stroke="#000" stroke-width="1.200"/><rect x="3.5" y="3.5" width="2.400" height="2.200" fill="#8a8a8a"/><rect x="3.5" y="7.2" width="2.400" height="2.200" fill="#8a8a8a"/><rect x="3.5" y="10.9" width="2.400" height="2.200" fill="#8a8a8a"/><rect x="7.5" y="3.5" width="2.400" height="2.200" fill="#8a8a8a"/><rect x="7.5" y="7.2" width="2.400" height="2.200" fill="#8a8a8a"/><rect x="7.5" y="10.9" width="2.400" height="2.200" fill="#8a8a8a"/><rect x="11.5" y="3.5" width="2.400" height="2.200" fill="#8a8a8a"/><rect x="11.5" y="7.2" width="2.400" height="2.200" fill="#8a8a8a"/><rect x="11.5" y="10.9" width="2.400" height="2.200" fill="#8a8a8a"/><path d="M13.500 9.500l4 4-4 4-4-4z" fill="#a8a8a8" stroke="#10e010" stroke-width="1.600"/></g></svg>
<svg style="left:93px;top:272px;" width="20" height="20"><g transform="translate(10 10) scale(0.930) translate(-10 -10)"><rect x="3" y="11" width="5.500" height="5.500" fill="#7e7e7e" stroke="#000" stroke-width="1.200"/><path d="M12.500 2.500l5 5-5 5-5-5z" fill="url(#gh)" stroke="#10e010" stroke-width="1.200"/></g></svg>
<svg style="left:117px;top:272px;" width="20" height="20"><g transform="translate(10 10) scale(0.930) translate(-10 -10)"><path d="M3 11h5v6H3zM12 2h6v6" fill="#7e7e7e" stroke="#000" stroke-width="1.200"/><path d="M8 17c6 0 10-3 10-9h-6c0 2-1 3-4 3z" fill="url(#gh)" stroke="#000" stroke-width="1"/></g></svg>
<svg style="left:141px;top:272px;" width="20" height="20"><g transform="translate(10 10) scale(0.930) translate(-10 -10)"><path d="M3 8c3-4 8-5 11-1l4-2v7l-4 6c-1-5-5-7-8-4z" fill="#6e6e6e" stroke="#000" stroke-width="1.100"/><path d="M3 8l5-5h10l-4 4c-3-4-8-3-11 1z" fill="url(#gh)"/><path d="M14 7l4-2v7l-4 6z" fill="url(#gh)" stroke="#000" stroke-width="0.800"/></g></svg>
<svg style="left:165px;top:272px;" width="20" height="20"><g transform="translate(10 10) scale(0.930) translate(-10 -10)"><path d="M3.500 3l4 3v8l-4 3z" fill="#8a8a8a" stroke="#000" stroke-width="1.300"/><path d="M16.500 3l-4 3.500v7l4 3.500z" fill="url(#gh)" stroke="#00a000" stroke-width="1.300"/></g></svg>
<svg style="left:45px;top:297px;" width="20" height="20"><g transform="translate(10 10) scale(0.930) translate(-10 -10)"><path d="M2 7c3-3 6-2 9-1s5 0 7-3v11c-3 3-5 2-8 1s-5 0-7 4z" fill="url(#gh)" stroke="#00a000" stroke-width="1.100"/><path d="M10.500 18V9M8 11.500l2.500-3 2.500 3" stroke="#000" stroke-width="1.500" fill="none"/></g></svg>
<svg style="left:69px;top:297px;" width="20" height="20"><g transform="translate(10 10) scale(0.930) translate(-10 -10)"><path d="M4 9c4 2 9 2 13 0l-2 5c1 1 2 2 2 3-3 2-10 2-13 0 0-1 1-2 2-3z" fill="url(#gh)" stroke="#00a000" stroke-width="1"/><ellipse cx="10.500" cy="5.500" rx="7" ry="2.300" fill="none" stroke="#000" stroke-width="1"/><path d="M7 6l3 2-3 1" stroke="#000" stroke-width="1.200" fill="none"/><path d="M4 9l-1 8M17 9l1 8" stroke="#000" stroke-width="0.900"/></g></svg>
<svg style="left:93px;top:297px;" width="20" height="20"><g transform="translate(10 10) scale(0.930) translate(-10 -10)"><path d="M2 17c1-5 3-10 5-12l7-.5c3 1 5 4 4 7s-4 4-7 4-5-1-9 1.500z" fill="url(#gh)" stroke="#00a000" stroke-width="1"/><path d="M2 17c1-5 3-10 5-12M7 4.500h7" stroke="#000" stroke-width="1.400" fill="none"/></g></svg>
<svg style="left:117px;top:297px;" width="20" height="20"><g transform="translate(10 10) scale(0.930) translate(-10 -10)"><path d="M2 8v6c0 4 16 4 16 0V8z" fill="#6e6e6e" stroke="#000" stroke-width="1.100"/><ellipse cx="10" cy="8" rx="8" ry="3.500" fill="url(#gh)" stroke="#00a000" stroke-width="1"/><path d="M7 12v5M8 13h4" stroke="#c5c5c5" stroke-width="1.300"/></g></svg>
<svg style="left:141px;top:297px;" width="20" height="20"><g transform="translate(10 10) scale(0.930) translate(-10 -10)"><path d="M2 16c0-6 4-11 10-12l6-1c-2 3-3 6-3 10-2-2-6-1-8 1s-3 3-5 2z" fill="url(#gh)" stroke="#00a000" stroke-width="1"/><path d="M8 8c3-2 6-3 9-3M12 4l6-1" stroke="#000" stroke-width="1.200" fill="none"/><path d="M12 12v4.500h4.500V12" stroke="#000" stroke-width="1.900" fill="none"/></g></svg>
<div style="left:164px;top:297px;width:23px;height:22px;background:#c6c6c6;box-shadow:inset 1px 1px 0 #f6f6f6,inset -1px -1px 0 #7a7a7a;"></div>
<svg style="left:165px;top:297px;" width="20" height="20"><g transform="translate(10 10) scale(0.930) translate(-10 -10)"><path d="M2 16c0-6 4-11 10-12l6-1c-2 3-3 6-3 10-2-2-6-1-8 1s-3 3-5 2z" fill="url(#gh)" stroke="#00a000" stroke-width="1"/><path d="M8 8c3-2 6-3 9-3M12 4l6-1" stroke="#000" stroke-width="1.200" fill="none"/><path d="M3.500 12v4.500H7.500V12M10 12l2.500 5 2.500-5" stroke="#000" stroke-width="1.900" fill="none"/></g></svg>
<svg style="left:45px;top:322px;" width="20" height="20"><g transform="translate(10 10) scale(0.930) translate(-10 -10)"><rect x="4" y="4.500" width="11" height="10.500" fill="url(#gh)"/><path d="M4.500 4v12M15 4v12" stroke="#e01010" stroke-width="1.300"/><path d="M4 4.500h11.500" stroke="#6a6a6a"/><text x="6.500" y="18" font-size="10" font-weight="bold" font-family="Liberation Sans, sans-serif" fill="#000" stroke="#000" stroke-width="0.500">1</text></g></svg>
<svg style="left:69px;top:322px;" width="20" height="20"><g transform="translate(10 10) scale(0.930) translate(-10 -10)"><rect x="4" y="4.500" width="11" height="10.500" fill="url(#gh)"/><path d="M4.500 4v12M15 4v12" stroke="#e01010" stroke-width="1.300"/><path d="M4 4.500h11.500" stroke="#6a6a6a"/><text x="6.500" y="18" font-size="10" font-weight="bold" font-family="Liberation Sans, sans-serif" fill="#000" stroke="#000" stroke-width="0.500">2</text></g></svg>
<svg style="left:93px;top:322px;" width="20" height="20"><g transform="translate(10 10) scale(0.930) translate(-10 -10)"><path d="M3 9h7V3h6v8l3 3-4.500 4.500L11 15H3z" fill="#6e6e6e" stroke="#000" stroke-width="1.100"/><circle cx="11" cy="11" r="3.200" fill="url(#gh)" stroke="#10e010" stroke-width="1.200"/></g></svg>
<svg style="left:117px;top:322px;" width="20" height="20"><g transform="translate(10 10) scale(0.930) translate(-10 -10)"><rect x="9" y="3.500" width="8" height="13" fill="#e4e4e4"/><path d="M9 3.500h8M9 16.500h8" stroke="#b4b4b4" stroke-dasharray="1 1"/><path d="M3 3.500h4c4 2 4 11 0 13H3z" fill="url(#gh)" stroke="#000" stroke-width="1.100"/><path d="M7 3.500c3 3 3 10 0 13" stroke="#000" stroke-width="1.800" fill="none"/><path d="M10 6c2 2 2 6 0 8" stroke="#10e010" stroke-width="1.600" fill="none"/></g></svg>
<svg style="left:141px;top:322px;" width="20" height="20"><g transform="translate(10 10) scale(0.930) translate(-10 -10)"><path d="M3 7l5-3h5c3 1 4 4 4 8l-3 4c0-4-1-7-4-8z" fill="#7e7e7e" stroke="#000" stroke-width="1.100"/><path d="M10 8l4-3.500c2 1.500 3 4 3 7.500l-3 4c0-4-1-7-4-8z" fill="url(#gh)" stroke="#00a000" stroke-width="0.800"/></g></svg>
<div style="left:172px;top:331px;width:117px;height:17px;background:#ffffe1;box-shadow:inset 0 0 0 1px #000;"></div>
<span class="t" style="left:175.30px;top:335px;font-size:11px;line-height:11px;color:#000;letter-spacing:-0.172px;">Create UV Loft Surface</span>
<div style="left:160px;top:910px;width:159px;height:31px;background:linear-gradient(#ffffff 0%,#f4f4fb 50%,#dcdcee 100%);border-radius:5px;box-shadow:inset 0 0 0 1px #b9b9d2,inset 0 0 0 2px #f6f6fc;"></div>
<svg style="left:165px;top:916px;" width="16" height="16"><defs><linearGradient id="rdi" x1="0" y1="0" x2="1" y2="1"><stop offset="0" stop-color="#3a8ae0"/><stop offset="1" stop-color="#0a3aa0"/></linearGradient></defs><rect width="16" height="16" fill="url(#rdi)"/><path d="M13 4c-4-3-9-1-10 3s3 7 6 6 4-4 2-6-5 0-4 2" stroke="#fff" stroke-width="1.900" fill="none"/><path d="M9 10l3 1" stroke="#cde" stroke-width="1.200"/></svg>
<span class="t" style="left:184.50px;top:920px;font-size:13px;line-height:13px;color:#b4b4b8;font-weight:bold;letter-spacing:-0.342px;">Ragdoll</span>
<div style="left:249px;top:915px;width:18px;height:19px;background:linear-gradient(#eaeaf4,#c4c4da);border-radius:3px;box-shadow:inset 0 0 0 1px #f4f4fc,0 0 0 1px #b8b8ce;"></div>
<div style="left:272px;top:915px;width:18px;height:19px;background:linear-gradient(#eaeaf4,#c4c4da);border-radius:3px;box-shadow:inset 0 0 0 1px #f4f4fc,0 0 0 1px #b8b8ce;"></div>
<svg style="left:253px;top:919px;" width="11" height="11"><rect x="3.700" y="0.700" width="6.500" height="5.500" fill="none" stroke="#8e94b4" stroke-width="1.300"/><rect x="0.700" y="4.200" width="6.500" height="5.800" fill="#d8d8e8" stroke="#8e94b4" stroke-width="1.300"/></svg>
<svg style="left:276px;top:919px;" width="11" height="11"><rect x="0.700" y="0.700" width="9.600" height="9.600" fill="none" stroke="#8e94b4" stroke-width="1.300"/><path d="M0.700 2h9.600" stroke="#8e94b4" stroke-width="2.200"/></svg>
<div style="left:295px;top:915px;width:19px;height:19px;background:linear-gradient(#f0b2ae,#da8888);border-radius:3px;box-shadow:inset 0 0 0 1px #f8d0cc,0 0 0 1px #d29494;"></div>
<svg style="left:298px;top:918px;" width="13" height="13"><path d="M1.500 1.500l10 10M11.500 1.500l-10 10" stroke="#fff" stroke-width="2"/></svg>
<svg style="left:1102px;top:70px;" width="24" height="22"><path d="M6 2l1 3.500 3.500-1-2.500 2.500 2 3-3.500-1.500-2.500 3 .5-3.500L1 7l3.500-1z" fill="#fff8c0" stroke="#e8e090" stroke-width="0.600"/><path d="M9.500 6.500L19 15.500l-4.200 .3 2.700 3.700-1.500 1-2.600-3.800-2.400 2.800z" fill="#fff" stroke="#3a3a3a" stroke-width="0.800"/></svg>
<svg style="left:1130px;top:70px;" width="24" height="22"><defs><linearGradient id="mt" x1="0" y1="0" x2="1" y2="1"><stop offset="0" stop-color="#c4cce8"/><stop offset="0.500" stop-color="#5a6aa0"/><stop offset="1" stop-color="#1e2648"/></linearGradient></defs><path d="M3 19C3 10 9 3 20 3v6c-7 0-11 4-11 10z" fill="url(#mt)" stroke="#1e2648" stroke-width="0.800"/><path d="M5 19C5 11 10 5 20 5" stroke="#e4e8f8" stroke-width="1" fill="none"/><path d="M2.500 2.500v1M20.500 19.500h1" stroke="#000" stroke-width="1.500"/><path d="M2.500 4v15.500h18" stroke="#555" stroke-width="0.600" stroke-dasharray="1 1" fill="none"/></svg>
<svg style="left:1158px;top:70px;" width="25" height="22"><path d="M12.500 8v5M12.500 9L4.500 16M12.500 9l8 7" stroke="#3a3a90" stroke-width="1.100" fill="none"/><rect x="9" y="1.500" width="7" height="7" fill="#e8e8fa" stroke="#3a3a90" stroke-width="1.100"/><rect x="2.500" y="15" width="4.500" height="4.500" fill="#fff" stroke="#3a3a90" stroke-width="1.100"/><rect x="10.200" y="15" width="4.500" height="4.500" fill="#fff" stroke="#3a3a90" stroke-width="1.100"/><rect x="18" y="15" width="4.500" height="4.500" fill="#fff" stroke="#3a3a90" stroke-width="1.100"/></svg>
<svg style="left:1187px;top:70px;" width="25" height="22"><path d="M5.500 4a8.500 8.500 0 0 0 0 12M3 5.500a6.500 6.500 0 0 0 0 9" stroke="#666" stroke-width="0.900" fill="none"/><circle cx="14.500" cy="10" r="7" fill="#e4e4e4" stroke="#111" stroke-width="1.900"/><path d="M14.500 3.500v13M8 10h13M10 5.500l9 9M19 5.500l-9 9" stroke="#444" stroke-width="0.800"/><circle cx="14.500" cy="10" r="1.500" fill="#e01010"/></svg>
<svg style="left:1216px;top:70px;" width="25" height="22"><rect x="2.500" y="1.500" width="19" height="15" rx="1.500" fill="#3a3a3a" stroke="#111" stroke-width="1"/><rect x="5" y="4" width="14" height="10" fill="#f0f4ff"/><rect x="7" y="5" width="3" height="7" fill="#4a5ad0" stroke="#1e2a90" stroke-width="0.600"/><path d="M14 5l3 8h-6z" fill="#e01818"/><rect x="9" y="17" width="6" height="2" fill="#555"/><rect x="6" y="19" width="12" height="1.500" fill="#333"/><rect x="11" y="17.500" width="2" height="1" fill="#20e020"/></svg>
<svg style="left:1245px;top:70px;" width="25" height="22"><path d="M3 4c3-2.500 8-3 12-1.500l4 1.500c1.500 1 2 3 1.500 5l-2 .5c0-2-1-3.500-3-3.500l-1 1.500h-4L10 5.500C8 5 5 5 3.500 6z" fill="#5a5a5a" stroke="#222" stroke-width="0.700"/><path d="M11 7.500h3l.8 13.500h-4.600z" fill="#8a2a1a" stroke="#333" stroke-width="0.600"/><path d="M10.800 14h3.500l.5 7h-4.500z" fill="#222"/></svg>
<svg style="left:1112px;top:288px;" width="18" height="13"><path d="M0 5.500h6" stroke="#000" stroke-width="1.200"/><rect x="6" y="1.500" width="2" height="8.500" fill="#000"/><rect x="8" y="3" width="5" height="5.500" fill="#f4f4f4" stroke="#000" stroke-width="1"/><rect x="13" y="1" width="2.500" height="9.500" fill="#000"/></svg>
<svg style="left:1151px;top:287px;" width="11" height="14"><path d="M1.500 0.500v13M8.500 0.500v13" stroke="#000" stroke-width="1.400"/><rect x="2.500" y="1" width="5" height="5.500" fill="#8a8a8a"/><rect x="2.500" y="6.500" width="5" height="7" fill="#fff"/></svg>
<svg style="left:1184px;top:287px;" width="18" height="15"><path d="M1 1l7 9.500 7-9.500" stroke="#a2a2a2" stroke-width="1" fill="none" stroke-dasharray="1.500 1"/><path d="M5.500 10.500l2.500-2.500 2.500 2.500-2.500 2.500z" fill="#d8d8d8" stroke="#a2a2a2" stroke-width="0.900"/></svg>
<svg style="left:1210px;top:287px;" width="14" height="15"><rect x="2" y="4" width="9" height="9.500" rx="3.500" fill="#d0d0d0" stroke="#a2a2a2" stroke-width="1.100"/><path d="M2 8h9" stroke="#a2a2a2"/><path d="M3 3c2-2 6-2 7 .5" stroke="#a2a2a2" fill="none" stroke-width="1.100"/><path d="M3 14.500h8" stroke="#f0f0f0"/></svg>
<svg style="left:1245px;top:286px;" width="18" height="17"><rect x="1" y="1.500" width="12" height="12" fill="#fff" stroke="#1414b4" stroke-width="1.600"/><rect x="0.200" y="0.500" width="13.600" height="3" fill="#1414b4"/><path d="M4 7h4v4H4zM9.500 6.500h6v3h-6zM9.500 11h6v3h-6z" fill="#e8e8e8" stroke="#222" stroke-width="1" stroke-dasharray="1.500 1"/></svg>
</body></html>
